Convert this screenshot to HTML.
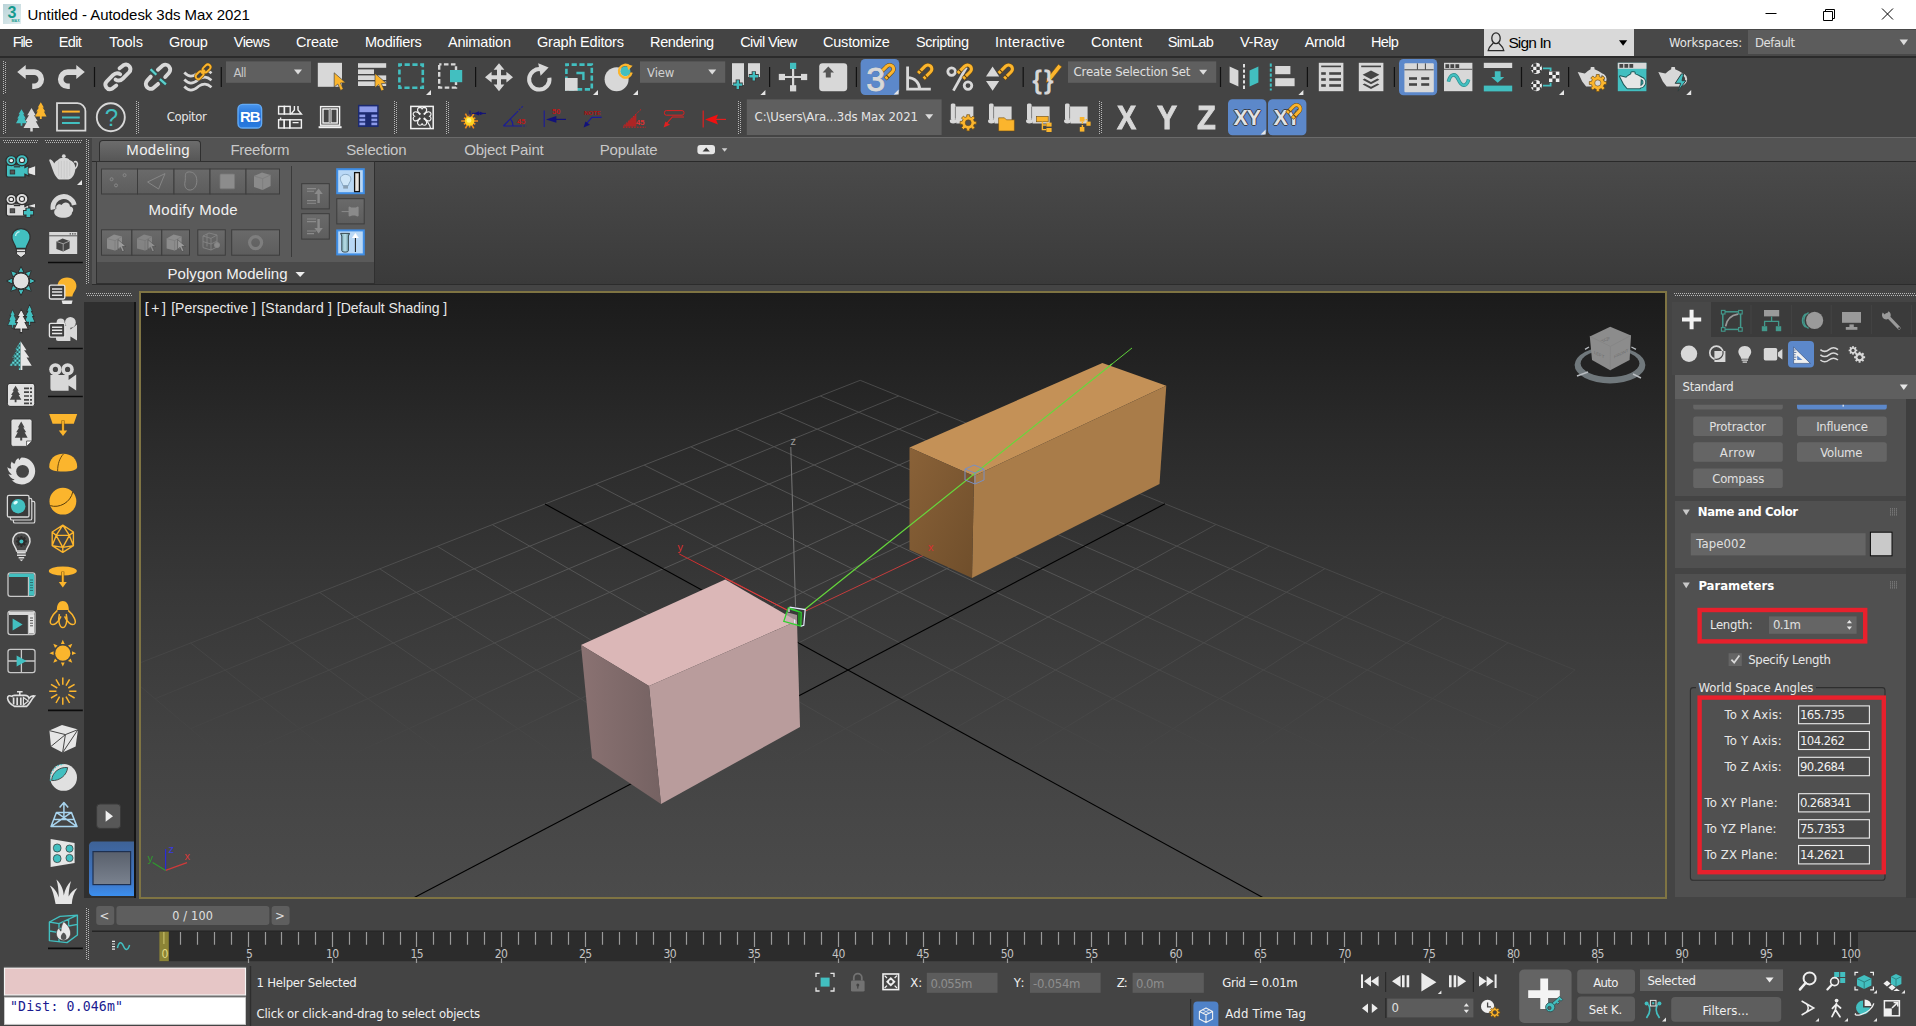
<!DOCTYPE html>
<html lang="en"><head><meta charset="utf-8"><title>Untitled - Autodesk 3ds Max 2021</title>
<style>
html,body{margin:0;padding:0;background:#444;}
body{width:1916px;height:1026px;position:relative;overflow:hidden;font-family:"Liberation Sans",sans-serif;}
#app{position:absolute;left:0;top:0;width:1916px;height:1026px;overflow:hidden;background:#444;}
#app div,#app svg,#app span{position:absolute;}
#app div{box-sizing:border-box;}
.t{white-space:pre;line-height:24px;height:24px;}
svg{overflow:visible;}
</style></head>
<body><div id="app">
<div style="left:0px;top:0px;width:1916px;height:29px;background:#ffffff;"></div>
<span id="t0" class="t" style="left:27.5px;top:2.8px;font-size:15px;color:#000;letter-spacing:-0.06px;">Untitled - Autodesk 3ds Max 2021</span>
<div style="left:3px;top:4px;width:18px;height:20px;background:linear-gradient(135deg,#b9d3d8,#e3eef0);"></div>
<span id="t1" class="t" style="left:7.6px;top:0.9px;font-size:16px;color:#169a8e;font-weight:700;">3</span>
<span id="t2" class="t" style="left:11.6px;top:9.4px;font-size:3.6px;color:#169a8e;font-weight:700;">MAX</span>
<svg style="left:1760px;top:0px;" width="156" height="29"><g stroke="#000" stroke-width="1" fill="none"><path d="M5.5 13.5h11"/><path d="M63.5 11.5h9v9h-9z M65.5 11.5v-2h9v9h-2"/><path d="M122 8.5l11 11M133 8.5l-11 11"/></g></svg>
<div style="left:0px;top:29px;width:1916px;height:27px;background:#444444;"></div>
<div style="left:0px;top:56px;width:1916px;height:2px;background:#2b2b2b;"></div>
<span id="t3" class="t" style="left:12.7px;top:29.8px;font-size:14.5px;color:#ffffff;letter-spacing:-1.12px;">File</span>
<span id="t4" class="t" style="left:58.8px;top:29.8px;font-size:14.5px;color:#ffffff;letter-spacing:-0.67px;">Edit</span>
<span id="t5" class="t" style="left:109.2px;top:29.8px;font-size:14.5px;color:#ffffff;letter-spacing:-0.01px;">Tools</span>
<span id="t6" class="t" style="left:169.0px;top:29.8px;font-size:14.5px;color:#ffffff;letter-spacing:-0.40px;">Group</span>
<span id="t7" class="t" style="left:233.8px;top:29.8px;font-size:14.5px;color:#ffffff;letter-spacing:-0.58px;">Views</span>
<span id="t8" class="t" style="left:295.9px;top:29.8px;font-size:14.5px;color:#ffffff;letter-spacing:-0.15px;">Create</span>
<span id="t9" class="t" style="left:365.0px;top:29.8px;font-size:14.5px;color:#ffffff;letter-spacing:-0.25px;">Modifiers</span>
<span id="t10" class="t" style="left:447.9px;top:29.8px;font-size:14.5px;color:#ffffff;letter-spacing:-0.17px;">Animation</span>
<span id="t11" class="t" style="left:537.0px;top:29.8px;font-size:14.5px;color:#ffffff;letter-spacing:-0.21px;">Graph Editors</span>
<span id="t12" class="t" style="left:650.0px;top:29.8px;font-size:14.5px;color:#ffffff;letter-spacing:-0.34px;">Rendering</span>
<span id="t13" class="t" style="left:740.2px;top:29.8px;font-size:14.5px;color:#ffffff;letter-spacing:-0.61px;">Civil View</span>
<span id="t14" class="t" style="left:823.0px;top:29.8px;font-size:14.5px;color:#ffffff;letter-spacing:-0.21px;">Customize</span>
<span id="t15" class="t" style="left:915.9px;top:29.8px;font-size:14.5px;color:#ffffff;letter-spacing:-0.42px;">Scripting</span>
<span id="t16" class="t" style="left:995.0px;top:29.8px;font-size:14.5px;color:#ffffff;letter-spacing:0.30px;">Interactive</span>
<span id="t17" class="t" style="left:1090.9px;top:29.8px;font-size:14.5px;color:#ffffff;letter-spacing:0.05px;">Content</span>
<span id="t18" class="t" style="left:1167.7px;top:29.8px;font-size:14.5px;color:#ffffff;letter-spacing:-0.61px;">SimLab</span>
<span id="t19" class="t" style="left:1239.9px;top:29.8px;font-size:14.5px;color:#ffffff;letter-spacing:-0.20px;">V-Ray</span>
<span id="t20" class="t" style="left:1304.7px;top:29.8px;font-size:14.5px;color:#ffffff;letter-spacing:-0.30px;">Arnold</span>
<span id="t21" class="t" style="left:1370.9px;top:29.8px;font-size:14.5px;color:#ffffff;letter-spacing:-0.61px;">Help</span>
<div style="left:1484px;top:29px;width:150px;height:27px;background:#d9d9d9;"></div>
<span id="t22" class="t" style="left:1508.4px;top:30.7px;font-size:15.5px;color:#000;letter-spacing:-0.86px;">Sign In</span>
<svg style="left:1484px;top:29px;" width="150" height="27"><g fill="none" stroke="#2a2a2a" stroke-width="1.3"><ellipse cx="12" cy="9.2" rx="4.2" ry="5.4"/><path d="M9.4 13.6C8.6 16 4.6 16.6 4.2 21.6H19.8C19.4 16.6 15.4 16 14.6 13.6"/></g><path d="M135 11.2H143.2L139.1 16.8Z" fill="#000"/></svg>
<div style="left:1634px;top:29px;width:282px;height:27px;background:#484848;"></div>
<span id="t23" class="t" style="left:1669.0px;top:31.0px;font-size:13px;color:#e6e6e6;font-family:'DejaVu Sans Condensed', 'DejaVu Sans', sans-serif;font-stretch:condensed;letter-spacing:-0.06px;">Workspaces:</span>
<div style="left:1747.5px;top:29.6px;width:169px;height:24.6px;background:#5c5c5c;"></div>
<svg style="left:1890px;top:29px;" width="26" height="27"><path d="M9.6 10.6H18L13.8 16.2Z" fill="#dcdcdc"/></svg>
<span id="t24" class="t" style="left:1755.0px;top:30.5px;font-size:13px;color:#e0e0e0;font-family:'DejaVu Sans Condensed', 'DejaVu Sans', sans-serif;font-stretch:condensed;letter-spacing:-0.46px;">Default</span>
<div style="left:0px;top:58px;width:1916px;height:80px;background:#444444;"></div>
<svg style="left:0;top:0" width="1916" height="140"><path d="M3.5 61V94M5.5 62V94" stroke="#b8b8b8" stroke-width="1" stroke-dasharray="1 1" fill="none"/><path transform="translate(17.2,65.1)" d="M0 7L8.5 0V4.2H17A9.9 9.9 0 0 1 17 24H15V18.4H17A4.3 4.3 0 0 0 17 9.8H8.5V14Z" fill="#d8d8d8"/><path transform="translate(84.8,65.1) scale(-1,1)" d="M0 7L8.5 0V4.2H17A9.9 9.9 0 0 1 17 24H15V18.4H17A4.3 4.3 0 0 0 17 9.8H8.5V14Z" fill="#d8d8d8"/><path d="M94.5 67V87" stroke="#111" stroke-width="1.2"/><g transform="translate(117.9,76.9)" fill="none" stroke="#d8d8d8" stroke-width="3.9" stroke-linecap="round"><path d="M1.66 -8.62L5.97 -11.93A4.6 4.6 0 0 1 11.27 -4.64L4.97 1.66C3.31 3.31 0.66 4.64 -2.32 2.65"/><path transform="rotate(180)" d="M1.66 -8.62L5.97 -11.93A4.6 4.6 0 0 1 11.27 -4.64L4.97 1.66C3.31 3.31 0.66 4.64 -2.32 2.65"/></g><g transform="translate(158,76.8)" fill="none" stroke-linecap="round"><path d="M-0.07 -7.13L4.9 -11.43A4.9 4.9 0 0 1 10.87 -3.81L7.23 0.17" stroke="#d8d8d8" stroke-width="3.9"/><path transform="rotate(180)" d="M-0.07 -7.13L4.9 -11.43A4.9 4.9 0 0 1 10.87 -3.81L7.23 0.17" stroke="#d8d8d8" stroke-width="3.9"/><path d="M-7.4 -7.5L-1.7 -2.1M1.9 2.4L7.9 7.5" stroke="#1f5f5f" stroke-width="3.4" stroke-linecap="butt"/><path d="M-7.4 -7.5L-1.7 -2.1M1.9 2.4L7.9 7.5" stroke="#5fd0cc" stroke-width="2.2" stroke-linecap="butt"/></g><g fill="none" stroke="#d8d8d8" stroke-width="2.7"><path d="M184.3 86.5C186.5 88.8 188.5 90.2 190.9 90.2C194.5 90.2 197 87.6 199 86C201 84.6 203 84.2 204.9 84.2C207.4 84.2 209.5 85.6 211.5 87.2"/><path transform="translate(0,-7)" d="M184.3 86.5C186.5 88.8 188.5 90.2 190.9 90.2C194.5 90.2 197 87.6 199 86C201 84.6 203 84.2 204.9 84.2C207.4 84.2 209.5 85.6 211.5 87.2"/><path transform="translate(0,-14)" d="M184.3 86.5C186.5 88.8 188.5 90.2 190.9 90.2C193.5 90.2 195.4 89 197 87.6M208.6 85.2C209.6 85.8 210.6 86.4 211.5 87.2"/></g><g fill="none" stroke="#6b4a12" stroke-width="3.0"><rect x="-4.4" y="-2.7" width="8.8" height="5.4" rx="2.7" transform="translate(206.6,68.4) rotate(-45)"/><rect x="-4.4" y="-2.7" width="8.8" height="5.4" rx="2.7" transform="translate(199.6,75.2) rotate(-45)"/><path d="M201.4 73.4L204.8 70" stroke-width="3.2"/></g><g fill="none" stroke="#fbb52d" stroke-width="1.9"><rect x="-4.4" y="-2.7" width="8.8" height="5.4" rx="2.7" transform="translate(206.6,68.4) rotate(-45)"/><rect x="-4.4" y="-2.7" width="8.8" height="5.4" rx="2.7" transform="translate(199.6,75.2) rotate(-45)"/><path d="M201.4 73.4L204.8 70" stroke-width="2.1"/></g><path d="M221.3 67V87" stroke="#111" stroke-width="1.2"/><rect x="226" y="61.4" width="85" height="21.4" fill="#5f5f5f"/><path d="M294.0 69.5h8l-4.0 5z" fill="#dcdcdc"/><rect x="317.8" y="62.8" width="24.2" height="24" fill="#d8d8d8"/><path transform="translate(334.2,72.8) scale(1.06)" d="M0 0L0 13.5L3.4 10.6L6 16.6L8.6 15.4L6 9.6L10.8 9.4Z" fill="#fbb52d" stroke="#3a3a3a" stroke-width="0.6"/><g fill="#d8d8d8"><rect x="358" y="63.2" width="28.2" height="4.6"/><rect x="358" y="69.4" width="16" height="4.6"/><rect x="358" y="75.4" width="28.2" height="4.6"/><rect x="358" y="81.4" width="28.2" height="4.6"/></g><path transform="translate(375,73.4) scale(1.06)" d="M0 0L0 13.5L3.4 10.6L6 16.6L8.6 15.4L6 9.6L10.8 9.4Z" fill="#fbb52d" stroke="#3a3a3a" stroke-width="0.6"/><rect x="399.4" y="64.6" width="23.4" height="23.2" fill="none" stroke="#42bfc0" stroke-width="2.6" stroke-dasharray="5.2 2.6" stroke-dashoffset="2.6"/><path d="M431 95h-5l5 -5z" fill="#e6e6e6"/><rect x="439.2" y="64.4" width="16.8" height="23.2" fill="none" stroke="#d8d8d8" stroke-width="2.4" stroke-dasharray="4.6 2.4" stroke-dashoffset="2.3"/><rect x="450" y="70" width="12.2" height="12.2" fill="#42bfc0"/><path d="M475.6 67V87" stroke="#111" stroke-width="1.2"/><path transform="translate(499,77.2)" d="M0 -14L5.4 -7.4H2V-2H7.4V-5.4L14 0L7.4 5.4V2H2V7.4H5.4L0 14L-5.4 7.4H-2V2H-7.4V5.4L-14 0L-7.4 -5.4V-2H-2V-7.4H-5.4Z" fill="#d8d8d8"/><path d="M541.6 69.4A10.2 10.2 0 1 0 549.4 77.8" fill="none" stroke="#d8d8d8" stroke-width="4"/><path d="M538.2 63.2L548.6 67.6L540.6 75.8Z" fill="#d8d8d8"/><rect x="566.4" y="64.6" width="25.4" height="24.8" fill="none" stroke="#42bfc0" stroke-width="2.6" stroke-dasharray="5.2 2.6" stroke-dashoffset="2.6"/><rect x="565" y="78" width="12.6" height="12.8" fill="#d8d8d8"/><path d="M576.4 73H583.4V80" fill="none" stroke="#42bfc0" stroke-width="2.4"/><path d="M598 95h-5l5 -5z" fill="#e6e6e6"/><circle cx="616.6" cy="79.2" r="12" fill="#d8d8d8"/><circle cx="625.4" cy="71.2" r="5" fill="#42bfc0"/><path d="M629.6 66.4A6.4 6.4 0 1 0 631.6 72.6" fill="none" stroke="#fbb52d" stroke-width="2.4"/><path d="M626.6 64.2L632.6 65.8L628.4 70.2Z" fill="#fbb52d"/><path d="M638 95h-5l5 -5z" fill="#e6e6e6"/><rect x="640" y="61.4" width="85.2" height="21.4" fill="#5f5f5f"/><path d="M708.2 69.5h8l-4.0 5z" fill="#dcdcdc"/><rect x="732" y="63.2" width="12" height="21.8" fill="#d8d8d8"/><rect x="748" y="63.2" width="12" height="13.8" fill="#d8d8d8"/><path d="M737.8 79.6v10M732.8 84.6h10M753.8 71.2v10M748.8 76.2h10" stroke="#3a3a3a" stroke-width="4.2"/><path d="M737.8 80.2v8.8M733.4 84.6h8.8M753.8 71.8v8.8M749.4 76.2h8.8" stroke="#42bfc0" stroke-width="2.4"/><path d="M765.4 95h-5l5 -5z" fill="#e6e6e6"/><path d="M769.6 67V87" stroke="#111" stroke-width="1.2"/><path d="M793.1 66V88M782 77H804" stroke="#d8d8d8" stroke-width="2.2"/><rect x="790" y="62.8" width="6.2" height="6.2" fill="#42bfc0"/><rect x="790" y="85.2" width="6.2" height="6.2" fill="#d8d8d8"/><rect x="778.8" y="73.9" width="6.2" height="6.2" fill="#d8d8d8"/><rect x="801" y="73.9" width="6.2" height="6.2" fill="#d8d8d8"/><rect x="819.2" y="63.2" width="28" height="28" rx="3.4" fill="#d8d8d8"/><path d="M828.3 66.6L834 72.4H830.8V77.6H825.8V72.4H822.6Z" fill="#555"/><path d="M856.4 67V87" stroke="#111" stroke-width="1.2"/><rect x="860.6" y="59" width="38.6" height="36" rx="4.5" fill="#5c88ca"/><path d="M898.6 94.4h-5l5 -5z" fill="#e6e6e6"/><g transform="translate(888.3439999999999,70.296) rotate(45) scale(1.04)" fill="none" stroke-linecap="butt"><path d="M-3.8 8V-1.8A3.8 3.8 0 0 1 3.8 -1.8V8" stroke="#6b4a12" stroke-width="4"/><path d="M-3.8 7.6V-1.8A3.8 3.8 0 0 1 3.8 -1.8V7.6" stroke="#fbb52d" stroke-width="3"/><path d="M-5.6 4.6h3.6M2 4.6h3.6" stroke="#5a3e10" stroke-width="1"/></g><path d="M907.6 66.6V89.2H930.8" fill="none" stroke="#d8d8d8" stroke-width="2.8"/><path d="M907.6 77.6C914.6 77.6 919.6 82.6 919.6 89.2" fill="none" stroke="#d8d8d8" stroke-width="2.8"/><g transform="translate(926.544,70.296) rotate(45) scale(1.04)" fill="none" stroke-linecap="butt"><path d="M-3.8 8V-1.8A3.8 3.8 0 0 1 3.8 -1.8V8" stroke="#6b4a12" stroke-width="4"/><path d="M-3.8 7.6V-1.8A3.8 3.8 0 0 1 3.8 -1.8V7.6" stroke="#fbb52d" stroke-width="3"/><path d="M-5.6 4.6h3.6M2 4.6h3.6" stroke="#5a3e10" stroke-width="1"/></g><g fill="none" stroke="#d8d8d8" stroke-width="2.8"><circle cx="951.6" cy="71.6" r="3.8"/><circle cx="968" cy="85.6" r="3.8"/><path d="M953.4 90.6L966.4 67.2"/></g><g transform="translate(966.144,70.296) rotate(45) scale(1.04)" fill="none" stroke-linecap="butt"><path d="M-3.8 8V-1.8A3.8 3.8 0 0 1 3.8 -1.8V8" stroke="#6b4a12" stroke-width="4"/><path d="M-3.8 7.6V-1.8A3.8 3.8 0 0 1 3.8 -1.8V7.6" stroke="#fbb52d" stroke-width="3"/><path d="M-5.6 4.6h3.6M2 4.6h3.6" stroke="#5a3e10" stroke-width="1"/></g><path d="M986 76.4L992.6 66.6L999.2 76.4ZM986 81L999.2 81L992.6 90.8Z" fill="#d8d8d8"/><g transform="translate(1007.144,70.296) rotate(45) scale(1.04)" fill="none" stroke-linecap="butt"><path d="M-3.8 8V-1.8A3.8 3.8 0 0 1 3.8 -1.8V8" stroke="#6b4a12" stroke-width="4"/><path d="M-3.8 7.6V-1.8A3.8 3.8 0 0 1 3.8 -1.8V7.6" stroke="#fbb52d" stroke-width="3"/><path d="M-5.6 4.6h3.6M2 4.6h3.6" stroke="#5a3e10" stroke-width="1"/></g><path d="M1023.2 67V87" stroke="#111" stroke-width="1.2"/><path d="M1047 78.6L1058.4 64.2L1061.8 66.8L1050.4 81.2L1046 82.6Z" fill="#fbb52d" stroke="#6b4a12" stroke-width="0.6"/><rect x="1068" y="61.4" width="148.2" height="21.4" fill="#5f5f5f"/><path d="M1199.2 69.7h8l-4.0 5z" fill="#dcdcdc"/><path d="M1220.5 67V87" stroke="#111" stroke-width="1.2"/><path d="M1229.6 66.4L1238.4 70.6V86.6L1229.6 82.4Z" fill="#d8d8d8"/><path d="M1244 64V90" stroke="#f0f0f0" stroke-width="1.8" stroke-dasharray="3.4 2"/><path d="M1258.4 66.4L1249.6 70.6V86.6L1258.4 82.4Z" fill="#42bfc0"/><path d="M1270.8 63.4V90.4" stroke="#42bfc0" stroke-width="2" stroke-dasharray="3.4 1.6"/><rect x="1275.2" y="66" width="15.2" height="8.2" fill="#d8d8d8"/><rect x="1275.2" y="78.2" width="19.4" height="8" fill="#d8d8d8"/><path d="M1303.4 95h-5l5 -5z" fill="#e6e6e6"/><path d="M1307.4 67V87" stroke="#111" stroke-width="1.2"/><rect x="1318.8" y="62.8" width="24.6" height="28.4" fill="#d8d8d8"/><g fill="#454545"><rect x="1321.2" y="65.6" width="19.8" height="1.6"/><rect x="1321.2" y="72.2" width="4.6" height="2.6"/><rect x="1329.2" y="72.2" width="11.8" height="2.6"/><rect x="1321.2" y="78.2" width="4.6" height="2.6"/><rect x="1329.2" y="78.2" width="11.8" height="2.6"/><rect x="1321.2" y="84.2" width="4.6" height="2.6"/><rect x="1329.2" y="84.2" width="11.8" height="2.6"/></g><rect x="1358.8" y="62.8" width="24.6" height="28.4" fill="#d8d8d8"/><g fill="#454545"><rect x="1361.2" y="65.6" width="19.8" height="1.6"/><path d="M1371 70.4L1379.4 74.8L1371 79.2L1362.6 74.8Z"/><path d="M1364.6 78.6L1371 82L1377.4 78.6L1379.4 79.8L1371 84.2L1362.6 79.8Z"/><path d="M1364.6 83.4L1371 86.8L1377.4 83.4L1379.4 84.6L1371 89L1362.6 84.6Z"/></g><path d="M1394.4 67V87" stroke="#111" stroke-width="1.2"/><rect x="1399" y="59" width="38.2" height="36.2" rx="4.5" fill="#5c88ca"/><rect x="1404.4" y="63.2" width="29.4" height="29" rx="1" fill="#d8d8d8"/><g fill="none" stroke="#454545" stroke-width="1"><path d="M1404.4 69.8H1417.4V63.4M1425.4 63.4V69.8M1417.4 69.8H1433.6"/></g><g fill="#454545"><rect x="1409" y="77.2" width="8" height="2.6"/><rect x="1421.2" y="77.2" width="8" height="2.6"/><rect x="1409" y="83.2" width="8" height="2.6"/><rect x="1421.2" y="83.2" width="8" height="2.6"/></g><rect x="1444" y="62.8" width="28.4" height="28.4" fill="#d8d8d8"/><g fill="#454545"><rect x="1445.4" y="64.2" width="3.8" height="3.8"/><rect x="1450.4" y="64.2" width="3.8" height="3.8"/><rect x="1455.4" y="64.2" width="3.8" height="3.8"/><rect x="1444" y="68.8" width="28.4" height="0.9"/></g><path d="M1448.4 81.6C1450.4 73.6 1455.4 72.6 1458.4 79.6S1466.4 87.6 1468.6 79.6" fill="none" stroke="#2e8f8f" stroke-width="3.6"/><path d="M1448.4 81.6C1450.4 73.6 1455.4 72.6 1458.4 79.6S1466.4 87.6 1468.6 79.6" fill="none" stroke="#42bfc0" stroke-width="2.2"/><rect x="1483.8" y="62.8" width="28.4" height="5.2" fill="#d8d8d8"/><path d="M1494.8 71.2H1500.6V77H1504.2L1497.7 82.8L1491.2 77H1494.8Z" fill="#42bfc0"/><rect x="1483.8" y="85.6" width="28.4" height="5.8" fill="#42bfc0"/><path d="M1521.5 67V87" stroke="#111" stroke-width="1.2"/><circle cx="1536.4" cy="68.3" r="5.6" fill="#f0f0f0"/><path d="M1533.2 63.3h3.2v3.4h-3.2zM1536.4 66.7h3.4v3.2h-3.4zM1533.2 69.89999999999999h3.2v3.2h-3.2zM1530.6 66.7h2.6v3.2h-2.6zM1539.8 63.9h1.4v2.8h-1.4zM1539.8 69.89999999999999h1.4v2.6h-1.4z" fill="#3c3c3c"/><circle cx="1536.4" cy="85.6" r="5.6" fill="#f0f0f0"/><path d="M1533.2 80.6h3.2v3.4h-3.2zM1536.4 84.0h3.4v3.2h-3.4zM1533.2 87.19999999999999h3.2v3.2h-3.2zM1530.6 84.0h2.6v3.2h-2.6zM1539.8 81.19999999999999h1.4v2.8h-1.4zM1539.8 87.19999999999999h1.4v2.6h-1.4z" fill="#3c3c3c"/><path d="M1543 68.3H1550.6V71M1543 85.6H1550.6V82.8" fill="none" stroke="#42bfc0" stroke-width="1.8"/><rect x="1549" y="71.6" width="10.4" height="10.4" fill="#f0f0f0"/><path d="M1552.4 71.6h3.4v3.4h-3.4zM1549 75h3.4v3.6h-3.4zM1555.8 75h3.6v3.6h-3.6zM1552.4 78.6h3.4v3.4h-3.4z" fill="#3c3c3c"/><path d="M1564 95h-5l5 -5z" fill="#e6e6e6"/><path d="M1568.6 67V87" stroke="#111" stroke-width="1.2"/><g transform="translate(1577.6,66.6) scale(1.0,1.0)" fill="#d8d8d8"><path d="M0.1 5.4L7.2 7C9 5.4 10.6 4.2 13 2.7V1.2Q13 0.5 13.8 0.5H16.2Q16.9 0.5 16.9 1.2V2.7C19.6 3.8 22 5 24 6.4L23.4 18.6L22.7 19.9H8.5L4.6 14.8Z"/><path d="M23.4 7.4C27.4 8.2 28.6 11.6 27.6 14.6C26.8 16.8 25.4 17.8 23 18.4" fill="none" stroke="#d8d8d8" stroke-width="2"/></g><path d="M1606.27 81.52L1606.27 84.48L1604.16 84.53L1603.37 86.42L1604.84 87.95L1602.75 90.04L1601.22 88.57L1599.33 89.36L1599.28 91.47L1596.32 91.47L1596.27 89.36L1594.38 88.57L1592.85 90.04L1590.76 87.95L1592.23 86.42L1591.44 84.53L1589.33 84.48L1589.33 81.52L1591.44 81.47L1592.23 79.58L1590.76 78.05L1592.85 75.96L1594.38 77.43L1596.27 76.64L1596.32 74.53L1599.28 74.53L1599.33 76.64L1601.22 77.43L1602.75 75.96L1604.84 78.05L1603.37 79.58L1604.16 81.47Z" fill="#fbb52d" stroke="#6b4a12" stroke-width="0.7"/><circle cx="1597.8" cy="83" r="3.10" fill="#d8d8d8" stroke="#6b4a12" stroke-width="0.6"/><rect x="1617.8" y="62.8" width="28.6" height="28.4" fill="#42bfc0"/><rect x="1617.8" y="62.8" width="28.6" height="6" fill="#d8d8d8"/><g fill="#454545"><rect x="1619.4" y="64" width="3.8" height="3.8"/><rect x="1624.4" y="64" width="3.8" height="3.8"/><rect x="1629.4" y="64" width="3.8" height="3.8"/></g><g stroke="#1f5a5a" stroke-width="2.4" stroke-linejoin="round"><g transform="translate(1619.9,71.9) scale(0.875,0.82)" fill="#1f5a5a"><path d="M0.1 5.4L7.2 7C9 5.4 10.6 4.2 13 2.7V1.2Q13 0.5 13.8 0.5H16.2Q16.9 0.5 16.9 1.2V2.7C19.6 3.8 22 5 24 6.4L23.4 18.6L22.7 19.9H8.5L4.6 14.8Z"/><path d="M23.4 7.4C27.4 8.2 28.6 11.6 27.6 14.6C26.8 16.8 25.4 17.8 23 18.4" fill="none" stroke="#1f5a5a" stroke-width="4"/></g></g><g transform="translate(1619.9,71.9) scale(0.875,0.82)" fill="#e6e6e6"><path d="M0.1 5.4L7.2 7C9 5.4 10.6 4.2 13 2.7V1.2Q13 0.5 13.8 0.5H16.2Q16.9 0.5 16.9 1.2V2.7C19.6 3.8 22 5 24 6.4L23.4 18.6L22.7 19.9H8.5L4.6 14.8Z"/><path d="M23.4 7.4C27.4 8.2 28.6 11.6 27.6 14.6C26.8 16.8 25.4 17.8 23 18.4" fill="none" stroke="#e6e6e6" stroke-width="2"/></g><g transform="translate(1658.2,66.6) scale(1.0,1.0)" fill="#d8d8d8"><path d="M0.1 5.4L7.2 7C9 5.4 10.6 4.2 13 2.7V1.2Q13 0.5 13.8 0.5H16.2Q16.9 0.5 16.9 1.2V2.7C19.6 3.8 22 5 24 6.4L23.4 18.6L22.7 19.9H8.5L4.6 14.8Z"/><path d="M23.4 7.4C27.4 8.2 28.6 11.6 27.6 14.6C26.8 16.8 25.4 17.8 23 18.4" fill="none" stroke="#d8d8d8" stroke-width="2"/></g><path d="M1681.4 73.9L1675.2 83.3H1680.7L1678.1 91.1L1685.9 80.7H1682L1683.7 73.9Z" fill="#42bfc0" stroke="#2f3f3f" stroke-width="1" stroke-linejoin="round"/><path d="M1691.2 95h-5l5 -5z" fill="#e6e6e6"/><path d="M3.5 101V134M5.5 102V134" stroke="#b8b8b8" stroke-width="1" stroke-dasharray="1 1" fill="none"/><path transform="translate(21.5,118.5) scale(0.86,1.04)" d="M0 -9L3.4 -4H2L5 0H3.4L6.4 4.6H1V7H-1V4.6H-6.4L-3.4 0H-5L-2 -4H-3.4Z" fill="#42bfc0"/><path transform="translate(40.8,111.6) scale(0.9,1.04)" d="M0 -9L3.4 -4H2L5 0H3.4L6.4 4.6H1V7H-1V4.6H-6.4L-3.4 0H-5L-2 -4H-3.4Z" fill="#fbb52d"/><path transform="translate(31.5,121.2) scale(1.25,1.47)" d="M0 -9L3.4 -4H2L5 0H3.4L6.4 4.6H1V7H-1V4.6H-6.4L-3.4 0H-5L-2 -4H-3.4Z" fill="#d8d8d8"/><path d="M57 103.2H77.4A8 8 0 0 1 85.4 111.2V130.6H57Z" fill="none" stroke="#d8d8d8" stroke-width="1.8"/><path d="M62 111.6H79.8" stroke="#fbb52d" stroke-width="2"/><path d="M62 117.6H79.8M62 123H79.8" stroke="#42bfc0" stroke-width="2"/><circle cx="110.8" cy="117.2" r="14" fill="none" stroke="#d8d8d8" stroke-width="1.9"/><path d="M136.5 101V134M138.5 102V134" stroke="#b8b8b8" stroke-width="1" stroke-dasharray="1 1" fill="none"/><defs><linearGradient id="rbg" x1="0" y1="0" x2="0" y2="1"><stop offset="0" stop-color="#4a96ee"/><stop offset="0.5" stop-color="#1f6fd6"/><stop offset="1" stop-color="#2a7ce0"/></linearGradient></defs><rect x="238" y="104.4" width="23.6" height="23.6" rx="4.6" fill="url(#rbg)" stroke="#62aaf6" stroke-width="1.4"/><g fill="none" stroke="#f2f2f2" stroke-width="1.4"><rect x="278.6" y="106.4" width="5.8" height="7.6"/><rect x="284.4" y="106.4" width="5.8" height="7.6"/><path d="M294.4 106V110L291 114H301.4L298 110V106"/><rect x="278.6" y="119.8" width="5.6" height="8.2"/><rect x="284.2" y="119.8" width="5.6" height="8.2"/><rect x="289.8" y="119.8" width="11.6" height="8.2"/><path d="M280.6 117.4V119.6M292.6 122.6H298.6"/></g><g fill="none" stroke="#f2f2f2" stroke-width="1.4"><rect x="320.6" y="106.6" width="19" height="18.6"/><rect x="323" y="109" width="6.4" height="14"/><rect x="330.8" y="109" width="6.4" height="14"/><path d="M318.6 127.2H341.6" stroke-width="2"/></g><rect x="329.2" y="109" width="1.8" height="14" fill="#9a9a9a"/><rect x="358" y="104.8" width="20.6" height="22.2" fill="#1c2a70"/><g fill="#8d9bea"><rect x="359.4" y="106.4" width="17.8" height="5.8"/><rect x="359.4" y="114.6" width="5.8" height="2.6"/><rect x="371.4" y="114.6" width="5.8" height="2.6"/><rect x="359.4" y="118.6" width="5.8" height="2.6"/><rect x="371.4" y="118.6" width="5.8" height="2.6"/><rect x="359.4" y="122.6" width="5.8" height="2.6"/><rect x="371.4" y="122.6" width="5.8" height="2.6"/></g><path d="M394.5 101V134M396.5 102V134" stroke="#b8b8b8" stroke-width="1" stroke-dasharray="1 1" fill="none"/><rect x="410.8" y="106.4" width="22.4" height="22.2" fill="none" stroke="#f2f2f2" stroke-width="1.5"/><g fill="none" stroke="#f2f2f2" stroke-width="1.25" stroke-linejoin="round"><path transform="translate(422.1,116.3) rotate(0) scale(0.93)" d="M-1.5 -2.4C-5.4 -3.6 -6.2 -9.4 -2.4 -9.6C-1 -9.6 -0.2 -8.8 0 -7.8C0.2 -8.8 1 -9.6 2.4 -9.6C6.2 -9.4 5.4 -3.6 1.5 -2.4"/><path transform="translate(422.1,116.3) rotate(90) scale(0.93)" d="M-1.5 -2.4C-5.4 -3.6 -6.2 -9.4 -2.4 -9.6C-1 -9.6 -0.2 -8.8 0 -7.8C0.2 -8.8 1 -9.6 2.4 -9.6C6.2 -9.4 5.4 -3.6 1.5 -2.4"/><path transform="translate(422.1,116.3) rotate(180) scale(0.93)" d="M-1.5 -2.4C-5.4 -3.6 -6.2 -9.4 -2.4 -9.6C-1 -9.6 -0.2 -8.8 0 -7.8C0.2 -8.8 1 -9.6 2.4 -9.6C6.2 -9.4 5.4 -3.6 1.5 -2.4"/><path transform="translate(422.1,116.3) rotate(270) scale(0.93)" d="M-1.5 -2.4C-5.4 -3.6 -6.2 -9.4 -2.4 -9.6C-1 -9.6 -0.2 -8.8 0 -7.8C0.2 -8.8 1 -9.6 2.4 -9.6C6.2 -9.4 5.4 -3.6 1.5 -2.4"/><path d="M423.8 118.6C427 120.8 429.6 124 430.4 128.2"/></g><path d="M446.5 101V134M448.5 102V134" stroke="#b8b8b8" stroke-width="1" stroke-dasharray="1 1" fill="none"/><path d="M473.6 121.0L478.0 121.0M473.1 123.0L475.3 124.3M471.6 124.5L473.8 128.3M469.6 125.0L469.6 127.6M467.6 124.5L465.4 128.3M466.1 123.0L463.9 124.3M465.6 121.0L461.2 121.0M466.1 119.0L463.9 117.7M467.6 117.5L465.4 113.7M469.6 117.0L469.6 114.4M471.6 117.5L473.8 113.7M473.1 119.0L475.3 117.7" stroke="#f08a1c" stroke-width="1.6"/><circle cx="469.6" cy="121" r="4.8" fill="#ffd21e"/><circle cx="469" cy="120.4" r="2.4" fill="#fff27a"/><g stroke="#12127a" fill="#12127a" stroke-width="1"><path d="M470 110.6V117M472 113.4H486"/><path d="M474 113.4L479 111.2V115.6ZM484 113.4L479.6 111.6V115.2Z" stroke="none"/></g><g fill="none" stroke="#1a1a9a" stroke-width="1.1"><path d="M503.4 126H520.6M503.4 126L516.6 112.6"/><path d="M516.6 112.6L523.6 105.4" stroke-dasharray="2 1.4"/><path d="M520.6 126H526.4" stroke-dasharray="1.4 1.4"/><path d="M510.4 119C512.4 121 513 123.4 513 126"/></g><path d="M544.2 110.4V127" stroke="#1a1a9a" stroke-width="1.1"/><path d="M546 119.4L556.4 116V122.8Z" fill="#12127a"/><path d="M555 119.4H566" stroke="#12127a" stroke-width="1.2"/><g fill="none" stroke="#1a1a9a" stroke-width="1.1"><path d="M601.6 117.4H592L585.6 124.6"/></g><path d="M583.6 127.4L585.4 121.4L590 124.8Z" fill="#12127a"/><path d="M623.4 126L641 109.4" stroke="#d02020" stroke-width="1" stroke-dasharray="2 1.2"/><path d="M623.4 126.4L636.4 114V126.4Z" fill="#c02020" opacity="0.85"/><path d="M623 127.2H646" stroke="#d02020" stroke-width="1" stroke-dasharray="1.6 1.2"/><g fill="none" stroke="#e02020" stroke-width="1.1"><path d="M684 117H672.4L666 124.2"/></g><path d="M663.6 127.4L665.4 121.4L670 124.8Z" fill="#e02020"/><rect x="664.4" y="110.6" width="19.6" height="4.6" rx="2" fill="none" stroke="#e02020" stroke-width="1"/><path d="M703.2 110.4V127.6" stroke="#e02020" stroke-width="1.2"/><path d="M705 119.4L718 114.4L716 119.4L718 124.4Z" fill="#f01010"/><path d="M716 119.4H726" stroke="#e02020" stroke-width="1.2"/><path d="M738.5 101V134M740.5 102V134" stroke="#b8b8b8" stroke-width="1" stroke-dasharray="1 1" fill="none"/><rect x="746.8" y="99.4" width="194.8" height="35.6" fill="#5f5f5f"/><path d="M925.2 114.3h8l-4.0 5z" fill="#dcdcdc"/><g transform="translate(949.8,103.2)" fill="#d8d8d8"><path d="M1 1.5C1 0 5.6 0 5.6 1.5L5.6 3.4L23.6 3.4L23.6 20.4L6.6 20.4 L5.6 16 L1 16Z"/><path d="M0 17.4C0 15.2 6.6 15.2 6.6 17.4C6.6 19.8 6 20.4 3.4 20.4C0.8 20.4 0 19.6 0 17.4Z"/><path d="M5.6 3.4V15.4" stroke="#6a6a6a" stroke-width="0.8"/></g><path d="M976.28 121.39L976.28 124.21L974.26 124.25L973.51 126.06L974.91 127.52L972.92 129.51L971.46 128.11L969.65 128.86L969.61 130.88L966.79 130.88L966.75 128.86L964.94 128.11L963.48 129.51L961.49 127.52L962.89 126.06L962.14 124.25L960.12 124.21L960.12 121.39L962.14 121.35L962.89 119.54L961.49 118.08L963.48 116.09L964.94 117.49L966.75 116.74L966.79 114.72L969.61 114.72L969.65 116.74L971.46 117.49L972.92 116.09L974.91 118.08L973.51 119.54L974.26 121.35Z" fill="#fbb52d" stroke="#6b4a12" stroke-width="0.7"/><circle cx="968.2" cy="122.8" r="2.95" fill="#505050" stroke="#6b4a12" stroke-width="0.6"/><g transform="translate(988,103.2)" fill="#d8d8d8"><path d="M1 1.5C1 0 5.6 0 5.6 1.5L5.6 3.4L23.6 3.4L23.6 20.4L6.6 20.4 L5.6 16 L1 16Z"/><path d="M0 17.4C0 15.2 6.6 15.2 6.6 17.4C6.6 19.8 6 20.4 3.4 20.4C0.8 20.4 0 19.6 0 17.4Z"/><path d="M5.6 3.4V15.4" stroke="#6a6a6a" stroke-width="0.8"/></g><path d="M998.6 117.8H1004.4L1006.4 119.8H1014.4V131H998.6Z" fill="#fbb52d" stroke="#6b4a12" stroke-width="0.6"/><g transform="translate(1026,103.2)" fill="#d8d8d8"><path d="M1 1.5C1 0 5.6 0 5.6 1.5L5.6 3.4L23.6 3.4L23.6 20.4L6.6 20.4 L5.6 16 L1 16Z"/><path d="M0 17.4C0 15.2 6.6 15.2 6.6 17.4C6.6 19.8 6 20.4 3.4 20.4C0.8 20.4 0 19.6 0 17.4Z"/><path d="M5.6 3.4V15.4" stroke="#6a6a6a" stroke-width="0.8"/></g><rect x="1036.6" y="116.4" width="11.6" height="5.4" fill="#fbb52d" stroke="#6b4a12" stroke-width="0.6"/><path d="M1042.4 121.8V129.6H1046.4M1042.4 125H1046.4" fill="none" stroke="#fbb52d" stroke-width="1.4"/><rect x="1046.4" y="122.6" width="5.2" height="4" fill="#fbb52d"/><rect x="1046.4" y="128" width="5.2" height="4" fill="#fbb52d"/><g transform="translate(1064,103.2)" fill="#d8d8d8"><path d="M1 1.5C1 0 5.6 0 5.6 1.5L5.6 3.4L23.6 3.4L23.6 20.4L6.6 20.4 L5.6 16 L1 16Z"/><path d="M0 17.4C0 15.2 6.6 15.2 6.6 17.4C6.6 19.8 6 20.4 3.4 20.4C0.8 20.4 0 19.6 0 17.4Z"/><path d="M5.6 3.4V15.4" stroke="#6a6a6a" stroke-width="0.8"/></g><path d="M1082.4 119.6H1087.2M1082.4 121.8V128.4M1088 122V122" fill="none" stroke="#fbb52d" stroke-width="1.4" stroke-dasharray="2 1.2"/><rect x="1079.8" y="117" width="4.6" height="4.6" fill="#fbb52d"/><rect x="1086.4" y="121.6" width="4.2" height="4.2" fill="#fbb52d"/><rect x="1079.8" y="127" width="4.6" height="4.6" fill="#fbb52d"/><path d="M1099.5 101V134M1101.5 102V134" stroke="#b8b8b8" stroke-width="1" stroke-dasharray="1 1" fill="none"/><rect x="1228" y="99.2" width="38.4" height="36" rx="4.5" fill="#5c88ca"/><path d="M1265.6 134.6h-5l5 -5z" fill="#e6e6e6"/><rect x="1268" y="99.2" width="38.4" height="36" rx="4.5" fill="#5c88ca"/></svg>
<span id="t25" class="t" style="left:233.4px;top:60.5px;font-size:13px;color:#c8c8c8;font-family:'DejaVu Sans Condensed', 'DejaVu Sans', sans-serif;font-stretch:condensed;letter-spacing:-0.66px;">All</span>
<span id="t26" class="t" style="left:647.1px;top:60.5px;font-size:13px;color:#d0d0d0;font-family:'DejaVu Sans Condensed', 'DejaVu Sans', sans-serif;font-stretch:condensed;letter-spacing:-0.14px;">View</span>
<span id="t27" class="t" style="left:1073.6px;top:59.8px;font-size:13px;color:#e0e0e0;font-family:'DejaVu Sans Condensed', 'DejaVu Sans', sans-serif;font-stretch:condensed;letter-spacing:-0.14px;">Create Selection Set</span>
<span id="t28" class="t" style="left:166.7px;top:105.2px;font-size:13px;color:#e6e6e6;font-family:'DejaVu Sans Condensed', 'DejaVu Sans', sans-serif;font-stretch:condensed;letter-spacing:-0.42px;">Copitor</span>
<span id="t29" class="t" style="left:754.6px;top:105.2px;font-size:13px;color:#e6e6e6;font-family:'DejaVu Sans Condensed', 'DejaVu Sans', sans-serif;font-stretch:condensed;letter-spacing:-0.11px;">C:\Users\Ara...3ds Max 2021</span>
<span id="t30" class="t" style="left:866.2px;top:67.4px;font-size:34px;color:#d8d8d8;-webkit-text-stroke:0.9px #d8d8d8;text-shadow:0 0 1px #30486e;">3</span>
<span id="t31" class="t" style="left:1032.8px;top:67.6px;font-size:26px;color:#d8d8d8;letter-spacing:3.00px;-webkit-text-stroke:1px #d8d8d8;">{}</span>
<span id="t32" class="t" style="left:104.8px;top:105.9px;font-size:24px;color:#42bfc0;">?</span>
<span id="t33" class="t" style="left:240.0px;top:105.2px;font-size:15px;color:#fff;font-weight:700;letter-spacing:-1.20px;">RB</span>
<span id="t34" class="t" style="left:1117.4px;top:105.6px;font-size:33.5px;color:#d8d8d8;font-weight:700;-webkit-text-stroke:0.9px #d8d8d8;transform:scaleX(0.86);transform-origin:0 0;">X</span>
<span id="t35" class="t" style="left:1156.8px;top:105.6px;font-size:33.5px;color:#d8d8d8;font-weight:700;-webkit-text-stroke:0.9px #d8d8d8;transform:scaleX(0.9);transform-origin:0 0;">Y</span>
<span id="t36" class="t" style="left:1197.4px;top:105.6px;font-size:33.5px;color:#d8d8d8;font-weight:700;-webkit-text-stroke:0.9px #d8d8d8;transform:scaleX(0.92);transform-origin:0 0;">Z</span>
<span id="t37" class="t" style="left:1233.4px;top:106.4px;font-size:21.5px;color:#e2e2e2;font-weight:700;letter-spacing:-1.08px;text-shadow:-1px 0 #3a3f4a,1px 0 #3a3f4a,0 -1px #3a3f4a,0 1px #3a3f4a;">XY</span>
<span id="t38" class="t" style="left:1273.4px;top:106.4px;font-size:21.5px;color:#e2e2e2;font-weight:700;letter-spacing:-1.20px;text-shadow:-1px 0 #3a3f4a,1px 0 #3a3f4a,0 -1px #3a3f4a,0 1px #3a3f4a;">XY</span>
<svg style="left:0;top:0" width="1916" height="140"><g transform="translate(1295.1999999999998,110.0) rotate(45) scale(1.0)" fill="none" stroke-linecap="butt"><path d="M-3.8 8V-1.8A3.8 3.8 0 0 1 3.8 -1.8V8" stroke="#6b4a12" stroke-width="4"/><path d="M-3.8 7.6V-1.8A3.8 3.8 0 0 1 3.8 -1.8V7.6" stroke="#fbb52d" stroke-width="3"/><path d="M-5.6 4.6h3.6M2 4.6h3.6" stroke="#5a3e10" stroke-width="1"/></g></svg>
<span id="t39" class="t" style="left:517.0px;top:110.4px;font-size:7.5px;color:#c01818;font-weight:700;">45</span>
<span id="t40" class="t" style="left:552.0px;top:100.4px;font-size:7.5px;color:#c01818;font-weight:700;">50</span>
<span id="t41" class="t" style="left:584.0px;top:100.5px;font-size:6px;color:#b01010;font-weight:700;">NOTE</span>
<span id="t42" class="t" style="left:636.0px;top:111.4px;font-size:7.5px;color:#e03030;font-weight:700;">45</span>
<div style="left:0px;top:137px;width:1916px;height:1px;background:#6a6a6a;"></div>
<div style="left:92px;top:138px;width:1824px;height:24px;background:#535353;"></div>
<div style="left:92px;top:161px;width:1824px;height:1px;background:#2a2a2a;"></div>
<div style="left:92px;top:162px;width:4px;height:122px;background:#555;"></div>
<div style="left:375px;top:162px;width:1541px;height:122px;background:linear-gradient(#4a4a4a,#3a3a3a);"></div>
<div style="left:92px;top:284px;width:1824px;height:1px;background:#2c2c2c;"></div>
<div style="left:99px;top:140px;width:102px;height:22px;background:linear-gradient(#6c6c6c,#555555);border:1px solid #2f2f2f;border-bottom:none;border-radius:4px 4px 0 0;"></div>
<span id="t43" class="t" style="left:126.3px;top:138.0px;font-size:15px;color:#f0f0f0;letter-spacing:0.36px;">Modeling</span>
<span id="t44" class="t" style="left:230.4px;top:138.0px;font-size:15px;color:#c8c8c8;letter-spacing:-0.26px;">Freeform</span>
<span id="t45" class="t" style="left:346.3px;top:138.0px;font-size:15px;color:#c8c8c8;letter-spacing:-0.18px;">Selection</span>
<span id="t46" class="t" style="left:464.2px;top:138.0px;font-size:15px;color:#c8c8c8;letter-spacing:-0.20px;">Object Paint</span>
<span id="t47" class="t" style="left:599.8px;top:138.0px;font-size:15px;color:#c8c8c8;letter-spacing:-0.20px;">Populate</span>
<div style="left:96px;top:161px;width:279px;height:123px;background:#5a5a5a;border:1px solid #303030;"></div>
<div style="left:97px;top:262px;width:277px;height:21px;background:#4a4a4a;"></div>
<span id="t48" class="t" style="left:148.5px;top:197.5px;font-size:15px;color:#f0f0f0;letter-spacing:0.33px;">Modify Mode</span>
<span id="t49" class="t" style="left:167.5px;top:261.7px;font-size:15px;color:#f0f0f0;letter-spacing:0.05px;">Polygon Modeling</span>
<svg style="left:0;top:0" width="1916" height="300"><path d="M86.5 139V283M88.5 140V283" stroke="#b8b8b8" stroke-width="1" stroke-dasharray="1 1" fill="none"/><defs><linearGradient id="bg1" x1="0" y1="0" x2="0" y2="1"><stop offset="0" stop-color="#6a6a6a"/><stop offset="1" stop-color="#5d5d5d"/></linearGradient></defs><rect x="101.5" y="169.0" width="36.0" height="25.0" fill="url(#bg1)" stroke="#3c3c3c" stroke-width="1"/><rect x="137.5" y="169.0" width="36.5" height="25.0" fill="url(#bg1)" stroke="#3c3c3c" stroke-width="1"/><rect x="174.0" y="169.0" width="36.0" height="25.0" fill="url(#bg1)" stroke="#3c3c3c" stroke-width="1"/><rect x="210.0" y="169.0" width="36.0" height="25.0" fill="url(#bg1)" stroke="#3c3c3c" stroke-width="1"/><rect x="246.0" y="169.0" width="33.5" height="25.0" fill="url(#bg1)" stroke="#3c3c3c" stroke-width="1"/><rect x="101.5" y="229.8" width="30.4" height="25.4" fill="url(#bg1)" stroke="#3c3c3c" stroke-width="1"/><rect x="131.9" y="229.8" width="29.9" height="25.4" fill="url(#bg1)" stroke="#3c3c3c" stroke-width="1"/><rect x="161.8" y="229.8" width="27.7" height="25.4" fill="url(#bg1)" stroke="#3c3c3c" stroke-width="1"/><rect x="197.8" y="229.8" width="27.5" height="25.4" fill="url(#bg1)" stroke="#3c3c3c" stroke-width="1"/><rect x="231.7" y="229.8" width="47.8" height="25.4" fill="url(#bg1)" stroke="#3c3c3c" stroke-width="1"/><g fill="none" stroke="#8a8a8a" stroke-width="0.9"><circle cx="111.6" cy="179.2" r="1.5"/><circle cx="124.6" cy="175.2" r="1.5"/><circle cx="116" cy="185.4" r="1.5"/><path d="M147.6 182L165 173.6L158.6 189Z"/><path d="M188 172C184 172.6 186 178 185 182C184 186 186 190.6 190.6 190C195.6 189.4 197.6 183 196.6 178.6C196 174 192.6 171.4 188 172Z"/></g><rect x="220" y="174" width="14.6" height="14.8" rx="1" fill="#8c8c8c" stroke="#787878" stroke-width="0.8"/><path d="M254 176L262 172.4L270.6 175V186L262.6 190L254 187Z" fill="#8a8a8a"/><path d="M254 176L262.6 178.6L270.6 175M262.6 178.6V190" fill="none" stroke="#7a7a7a" stroke-width="0.7"/><g opacity="1.0"><path d="M107 238.6L114 234.6L122 236.6V247.6L115 250.6L107 248.6Z" fill="#8c8c8c"/><path d="M107 238.6L115 240.6L122 236.6M115 240.6V250.6" fill="none" stroke="#7a7a7a" stroke-width="0.7"/><path transform="translate(118,239.6) scale(0.72)" d="M0 0L0 13.5L3.4 10.6L6 16.6L8.6 15.4L6 9.6L10.8 9.4Z" fill="#9a9a9a" stroke="#3a3a3a" stroke-width="0.6"/></g><g opacity="0.8"><path d="M137 238.6L144 234.6L152 236.6V247.6L145 250.6L137 248.6Z" fill="#8c8c8c"/><path d="M137 238.6L145 240.6L152 236.6M145 240.6V250.6" fill="none" stroke="#7a7a7a" stroke-width="0.7"/><path transform="translate(148,239.6) scale(0.72)" d="M0 0L0 13.5L3.4 10.6L6 16.6L8.6 15.4L6 9.6L10.8 9.4Z" fill="#9a9a9a" stroke="#3a3a3a" stroke-width="0.6"/></g><g opacity="1.0"><path d="M166.6 238.6L173.6 234.6L181.6 236.6V247.6L174.6 250.6L166.6 248.6Z" fill="#8c8c8c"/><path d="M166.6 238.6L174.6 240.6L181.6 236.6M174.6 240.6V250.6" fill="none" stroke="#7a7a7a" stroke-width="0.7"/><path transform="translate(177.6,239.6) scale(0.72)" d="M0 0L0 13.5L3.4 10.6L6 16.6L8.6 15.4L6 9.6L10.8 9.4Z" fill="#9a9a9a" stroke="#3a3a3a" stroke-width="0.6"/></g><g fill="none" stroke="#858585" stroke-width="0.9"><path d="M203 236L209 233L217 235V247L211 250L203 247.6ZM203 236L211 238.4L217 235M211 238.4V250M207 234V246.6M203 241.6L211 244L217 241"/><circle cx="217" cy="245" r="2.6" fill="#8a8a8a"/></g><circle cx="255.6" cy="242.6" r="6" fill="none" stroke="#7e7e7e" stroke-width="3.2"/><path d="M291.5 166V257" stroke="#3a3a3a" stroke-width="1"/><rect x="301.7" y="183.7" width="27.6" height="25.2" fill="url(#bg1)" stroke="#3c3c3c" stroke-width="1"/><rect x="301.7" y="213.7" width="27.6" height="25.4" fill="url(#bg1)" stroke="#3c3c3c" stroke-width="1"/><g stroke="#8a8a8a" stroke-width="1.1" fill="none"><path d="M307 188.6H316M307 191.2H314M307 200.6H316M307 203.2H316"/><path d="M318.6 203V193" stroke-width="2.4"/></g><path d="M314.4 194L318.6 188.4L322.8 194Z" fill="#8a8a8a"/><g stroke="#8a8a8a" stroke-width="1.1" fill="none"><path d="M307 219H316M307 221.6H316M307 231H316M307 233.6H314"/><path d="M318.6 219V229" stroke-width="2.4"/></g><path d="M314.4 228L318.6 233.6L322.8 228Z" fill="#8a8a8a"/><rect x="337.2" y="169.2" width="26.6" height="24.0" fill="#b9d8f6" stroke="#3f8ee6" stroke-width="2"/><path d="M345.6 174.4C349.6 174.4 351.6 177.4 350.6 180.4C350 182.4 348.6 183.4 348.4 185.6H342.8C342.6 183.4 341.2 182.4 340.6 180.4C339.6 177.4 341.6 174.4 345.6 174.4Z" fill="#cfe6f8" stroke="#7a9ab8" stroke-width="0.8"/><rect x="343.2" y="185.6" width="4.8" height="3" fill="#8aa0b4"/><rect x="354.6" y="172.6" width="4.8" height="19" fill="#e8e4e0" stroke="#101010" stroke-width="1.3"/><rect x="336.8" y="198.7" width="27.4" height="25.2" fill="url(#bg1)" stroke="#3c3c3c" stroke-width="1"/><g fill="#8a8a8a"><path d="M349.6 206.4C351.6 208 355.6 208 357.6 206.4L358.6 207V216L357.6 216.6C355.6 215 351.6 215 349.6 216.6L348.6 216V207Z"/></g><path d="M341.6 211.6H349" stroke="#8a8a8a" stroke-width="1"/><rect x="337.2" y="230.4" width="26.6" height="24.0" fill="#b9d8f6" stroke="#3f8ee6" stroke-width="2"/><defs><linearGradient id="tube" x1="0" y1="0" x2="1" y2="0"><stop offset="0" stop-color="#6fa3b0"/><stop offset="0.5" stop-color="#b8dde6"/><stop offset="1" stop-color="#5a8a98"/></linearGradient></defs><path d="M340.6 233.4H349.6L348.4 236V250.6C348.4 252.6 341.8 252.6 341.8 250.6V236Z" fill="url(#tube)" stroke="#2a3a40" stroke-width="0.9"/><path d="M355.4 252V236" stroke="#1a1a1a" stroke-width="1"/><path d="M352.2 238L355.4 233.2L358.6 238" fill="#fff" stroke="#f8f8f8" stroke-width="0.6"/><path d="M295.5 271.9h9.4l-4.7 5z" fill="#ededed"/><rect x="697.4" y="145" width="17.6" height="9.2" rx="3" fill="#e6e6e6"/><path d="M702.6 151.6L706.2 147.6L709.8 151.6Z" fill="#3a3a3a"/><path d="M721.8000000000001 148.3h5.6l-2.8 3.4z" fill="#d0d0d0"/></svg>
<div style="left:84px;top:302px;width:50px;height:596px;background:#2f2f2f;"></div>
<div style="left:134px;top:302px;width:2px;height:596px;background:#151515;"></div>
<svg style="left:0;top:0" width="140" height="1026"><path d="M3 140.5H38M4 142.5H38" stroke="#b8b8b8" stroke-width="1" stroke-dasharray="1 1" fill="none"/><path d="M45 140.5H82M46 142.5H82" stroke="#b8b8b8" stroke-width="1" stroke-dasharray="1 1" fill="none"/><path d="M86.5 139V284M88.5 140V284" stroke="#b8b8b8" stroke-width="1" stroke-dasharray="1 1" fill="none"/><path d="M86 293.5H132M87 295.5H132" stroke="#b8b8b8" stroke-width="1" stroke-dasharray="1 1" fill="none"/><path d="M86.5 908V960M88.5 909V960" stroke="#b8b8b8" stroke-width="1" stroke-dasharray="1 1" fill="none"/><g transform="translate(4.2,154.6) scale(1.07,1)"><path d="M2 10.4H19.4V13L23 11V21.4L19.4 19.6V22.6H4C2.6 22.6 2 21.8 2 20.6Z" fill="#42bfc0" stroke="#2f2f2f" stroke-width="1.2"/><circle cx="6.6" cy="6" r="5" fill="#42bfc0" stroke="#2f2f2f" stroke-width="1.2"/><circle cx="16.6" cy="5.6" r="5.6" fill="#42bfc0" stroke="#2f2f2f" stroke-width="1.2"/><circle cx="6.6" cy="6" r="2.2" fill="#f0f0f0" stroke="#2f2f2f" stroke-width="1"/><circle cx="16.6" cy="5.6" r="2.4" fill="#f0f0f0" stroke="#2f2f2f" stroke-width="1"/><rect x="5.6" y="15.4" width="4.2" height="4" fill="#555" stroke="#2f2f2f" stroke-width="0.8"/><path d="M9 12.2H15" stroke="#2f2f2f" stroke-width="1.2"/><path d="M22.4 13.6L29.4 11V21.4L22.4 19Z" fill="#e6e6e6" stroke="#2f2f2f" stroke-width="0.8"/></g><g transform="translate(4.2,193.4) scale(1.07,1)"><path d="M2 10.4H19.4V13L23 11V21.4L19.4 19.6V22.6H4C2.6 22.6 2 21.8 2 20.6Z" fill="#dcdcdc" stroke="#2f2f2f" stroke-width="1.2"/><circle cx="6.6" cy="6" r="5" fill="#dcdcdc" stroke="#2f2f2f" stroke-width="1.2"/><circle cx="16.6" cy="5.6" r="5.6" fill="#dcdcdc" stroke="#2f2f2f" stroke-width="1.2"/><circle cx="6.6" cy="6" r="2.2" fill="#f0f0f0" stroke="#2f2f2f" stroke-width="1"/><circle cx="16.6" cy="5.6" r="2.4" fill="#f0f0f0" stroke="#2f2f2f" stroke-width="1"/><rect x="5.6" y="15.4" width="4.2" height="4" fill="#555" stroke="#2f2f2f" stroke-width="0.8"/><path d="M9 12.2H15" stroke="#2f2f2f" stroke-width="1.2"/><path d="M22.4 12.6L28.8 10.6V14" fill="#e6e6e6"/><path d="M22.6 14.4V24.4M17.6 19.4H27.8" stroke="#2f2f2f" stroke-width="5.6"/><path d="M22.6 15.2V23.6M18.4 19.4H27" stroke="#42bfc0" stroke-width="3.4"/></g><path d="M21 228.6C27 228.6 30.6 233 30 238.4C29.6 242.4 26.6 244.4 26 248.4H16C15.4 244.4 12.4 242.4 12 238.4C11.4 233 15 228.6 21 228.6Z" fill="#42bfc0" stroke="#2f2f2f" stroke-width="1.2"/><path d="M16.4 249H25.6V254L21 257.6L16.4 254Z" fill="#e0e0e0" stroke="#2f2f2f" stroke-width="1"/><path d="M16.6 251.6H25.4" stroke="#2f2f2f" stroke-width="0.9"/><path d="M15.6 236C15.8 233.6 17.4 232 19.6 231.6" fill="none" stroke="#bff0f0" stroke-width="1.3"/><path d="M21.0 266.4L24.0 272.4L18.0 272.4ZM31.3 270.7L29.2 277.0L25.0 272.8ZM35.6 281.0L29.6 284.0L29.6 278.0ZM31.3 291.3L25.0 289.2L29.2 285.0ZM21.0 295.6L18.0 289.6L24.0 289.6ZM10.7 291.3L12.8 285.0L17.0 289.2ZM6.4 281.0L12.4 278.0L12.4 284.0ZM10.7 270.7L17.0 272.8L12.8 277.0Z" fill="#42bfc0" stroke="#2f2f2f" stroke-width="1"/><circle cx="21" cy="281" r="8" fill="#e0e0e0" stroke="#2f2f2f" stroke-width="1"/><path transform="translate(12.6,320) scale(0.78,1.16)" d="M0 -9L3.4 -4H2L5 0H3.4L6.4 4.6H1V7H-1V4.6H-6.4L-3.4 0H-5L-2 -4H-3.4Z" fill="#42bfc0" stroke="#2f2f2f" stroke-width="0.8"/><path transform="translate(29.6,316.4) scale(0.86,1.3)" d="M0 -9L3.4 -4H2L5 0H3.4L6.4 4.6H1V7H-1V4.6H-6.4L-3.4 0H-5L-2 -4H-3.4Z" fill="#42bfc0" stroke="#2f2f2f" stroke-width="0.8"/><path transform="translate(21.2,322.4) scale(1.12,1.46)" d="M0 -9L3.4 -4H2L5 0H3.4L6.4 4.6H1V7H-1V4.6H-6.4L-3.4 0H-5L-2 -4H-3.4Z" fill="#e6e6e6" stroke="#2f2f2f" stroke-width="0.7"/><defs><pattern id="chk" width="2.4" height="2.4" patternUnits="userSpaceOnUse"><rect width="2.4" height="2.4" fill="#2a5a5a"/><rect width="1.2" height="1.2" fill="#5fd8d8"/><rect x="1.2" y="1.2" width="1.2" height="1.2" fill="#5fd8d8"/></pattern><clipPath id="hl"><rect x="-10" y="-12" width="10" height="24"/></clipPath><clipPath id="hr"><rect x="0" y="-12" width="10" height="24"/></clipPath></defs><g transform="translate(20.6,357.4) scale(1.74,1.8)"><path d="M0 -9L3.4 -4H2L5 0H3.4L6.4 4.6H1V7H-1V4.6H-6.4L-3.4 0H-5L-2 -4H-3.4Z" fill="url(#chk)" clip-path="url(#hl)"/><path d="M0 -9L3.4 -4H2L5 0H3.4L6.4 4.6H1V7H-1V4.6H-6.4L-3.4 0H-5L-2 -4H-3.4Z" fill="#e6e6e6" clip-path="url(#hr)"/></g><rect x="7.4" y="383.4" width="27.4" height="23" rx="2.6" fill="#e0e0e0" stroke="#2f2f2f" stroke-width="1"/><path transform="translate(15.6,395) scale(0.9,1.04)" d="M0 -9L3.4 -4H2L5 0H3.4L6.4 4.6H1V7H-1V4.6H-6.4L-3.4 0H-5L-2 -4H-3.4Z" fill="#444"/><path d="M24 388.4H32M24 392.2H32M24 396H32M24 399.8H32M24 403.4H32" stroke="#444" stroke-width="1.7" stroke-dasharray="5 1 2"/><path d="M13.4 419H29.6C31 419 32 420 32 421.4V441L26.6 446.4H13.4C12 446.4 11 445.4 11 444V421.4C11 420 12 419 13.4 419Z" fill="#e0e0e0" stroke="#2f2f2f" stroke-width="0.8"/><path transform="translate(21.2,432.2) scale(1.0,1.2)" d="M0 -9L3.4 -4H2L5 0H3.4L6.4 4.6H1V7H-1V4.6H-6.4L-3.4 0H-5L-2 -4H-3.4Z" fill="#444"/><path d="M26.6 446.4V441H32Z" fill="#f8f8f8" stroke="#444" stroke-width="0.8"/><path d="M21.8 457.6C29.4 457.6 35.2 463.6 35.2 471C35.2 478.6 29.2 484.4 21.8 484.4C17.4 484.4 14 482.6 11.6 480C13 480.4 14 480.2 14.6 479.6C11.6 478.6 9.4 476.6 8.4 474C9.8 474.8 11 474.8 11.8 474.4C9.4 472.6 7.6 470 7.4 467C8.8 468.4 10.2 468.8 11.4 468.4C10.4 466.4 10.4 463.6 11.8 461.4C12.6 463 13.8 463.6 15 463.6C15 461.4 16.4 459 18.6 458C18.6 459 19 459.6 19.6 460C20.2 458.6 21 457.8 21.8 457.6Z" fill="#e0e0e0"/><circle cx="22.6" cy="471.4" r="6.4" fill="#444"/><g fill="none" stroke="#d8d8d8" stroke-width="1.2"><path d="M31.4 501.4H33.2C34.2 501.4 34.8 502 34.8 503V521.4C34.8 522.4 34.2 523 33.2 523H15C14 523 13.4 522.4 13.4 521.4V520"/><path d="M28.4 498.4H30.2C31.2 498.4 31.8 499 31.8 500V518.4C31.8 519.4 31.2 520 30.2 520H12C11 520 10.4 519.4 10.4 518.4V517"/></g><rect x="7.4" y="495.4" width="21.6" height="21.6" rx="1.6" fill="#3a3a3a" stroke="#d8d8d8" stroke-width="1.3"/><circle cx="18.2" cy="506.2" r="7.2" fill="#42bfc0"/><ellipse cx="15.6" cy="502.6" rx="2.4" ry="1.5" fill="#d8ffff" transform="rotate(-30 15.6 502.6)"/><path d="M21.4 532.6C27 532.6 30.4 536.6 30 541.6C29.6 545.4 26.8 547.2 26.2 551H16.6C16 547.2 13.2 545.4 12.8 541.6C12.4 536.6 15.8 532.6 21.4 532.6Z" fill="#4a4a4a" stroke="#dcdcdc" stroke-width="1.5"/><path d="M17 552.6H25.800000000000001M17 555.2H25.8M18.6 557.8H24.2" stroke="#dcdcdc" stroke-width="1.6"/><path d="M19.4 559.6H23.4L21.4 561.2Z" fill="#dcdcdc"/><path d="M26.92 540.44L26.92 542.36L25.54 542.39L25.03 543.62L25.98 544.62L24.62 545.98L23.62 545.03L22.39 545.54L22.36 546.92L20.44 546.92L20.41 545.54L19.18 545.03L18.18 545.98L16.82 544.62L17.77 543.62L17.26 542.39L15.88 542.36L15.88 540.44L17.26 540.41L17.77 539.18L16.82 538.18L18.18 536.82L19.18 537.77L20.41 537.26L20.44 535.88L22.36 535.88L22.39 537.26L23.62 537.77L24.62 536.82L25.98 538.18L25.03 539.18L25.54 540.41Z" fill="#2c2c2c" stroke="none" stroke-width="0.7"/><circle cx="21.4" cy="541.4" r="2.02" fill="#42bfc0" stroke="none" stroke-width="0.6"/><rect x="8" y="572.8" width="27" height="23.6" rx="2.4" fill="#3e3e3e" stroke="#c8c8c8" stroke-width="1.3"/><path d="M9 573.6H34V577H9Z" fill="#42bfc0"/><rect x="28.6" y="577" width="5.6" height="18.6" fill="#42bfc0"/><path d="M28.4 577V596" stroke="#c8c8c8" stroke-width="1.1"/><path d="M30 580H33M30 582.6H33M30 585.2H33M30 587.8H33M30 590.4H33" stroke="#2a6a6a" stroke-width="1"/><rect x="8" y="611.2" width="27" height="23.4" rx="2.4" fill="#3e3e3e" stroke="#c8c8c8" stroke-width="1.3"/><path d="M9 612H34V615H9Z" fill="#d8d8d8"/><rect x="28.6" y="615" width="5.6" height="18.6" fill="#e6e6e6"/><path d="M28.4 615V634" stroke="#c8c8c8" stroke-width="1.1"/><path d="M30 618H33M30 620.6H33M30 623.2H33M30 625.8H33" stroke="#555" stroke-width="1"/><path d="M12.6 618.4L22.6 624.4L12.6 630.4Z" fill="#42bfc0"/><rect x="8" y="649.4" width="27" height="23.2" rx="2.4" fill="#3e3e3e" stroke="#c8c8c8" stroke-width="1.3"/><path d="M21.4 649.4V672.6M8 661H35" stroke="#c8c8c8" stroke-width="1.3"/><path d="M16.6 655.4L26.6 661L16.6 666.6Z" fill="#42bfc0"/><g fill="none" stroke="#e0e0e0" stroke-width="1.6"><path d="M12 696.4C9 695 7.4 696 7.6 698.4C8 701.4 10.4 704.4 14.4 706.4H26.6C30 703.6 31 699.6 34.6 696C32.6 695.6 30.6 696 29 698.4C28.6 696.4 27 695.4 25 695.4H14.6C13 695.4 12.2 695.6 12 696.4Z"/><path d="M19.8 695V692M17 691.8H22.6"/></g><path d="M13.6 697.4V704.4M17.2 697.4V705M20.8 697.4V705" stroke="#e0e0e0" stroke-width="1.7"/><path d="M23.4 697.4L28.4 701L23.4 705Z" fill="none" stroke="#e0e0e0" stroke-width="1.2"/><g transform="translate(49,154)"><path d="M1.6 5.4C0.6 5 0 5.8 0.4 7C2 10.4 2.6 13 4 16.4C5.6 21 8.6 25.6 11 25.6H19.6C23.6 24.6 26 20.4 26.4 14.6C26.6 10.6 24.6 7.6 21.6 6.4C17.6 4.6 11.6 4.6 8 6.4C6.4 7.2 5.6 8.4 5.4 9.6C4.6 8 3.4 6.2 1.6 5.4Z" fill="#d8d8d8"/><path d="M25 8C27.4 6.8 29 8.6 28.2 11.4C27.6 13.6 26.6 14.6 25.4 15" fill="none" stroke="#d8d8d8" stroke-width="1.6"/><path d="M9 6.2C10 4.6 12 3.8 14.6 3.8C17.4 3.8 19.6 4.6 20.6 6.2Z" fill="#d8d8d8"/><circle cx="14.8" cy="2.2" r="1.9" fill="#d8d8d8"/><path d="M9.6 7.4V22M12.4 6.8V24M15.2 6.8V24.6M18 6.8V24M20.8 7.6V22" stroke="#c4c4c4" stroke-width="0.7" fill="none"/></g><path d="M82 185h-5l5 -5z" fill="#e6e6e6"/><path d="M50 207.4A13.2 13.2 0 0 1 76.4 207.4L71.6 207.4A8.4 8.4 0 0 0 54.8 207.4Z" fill="#d8d8d8" transform="rotate(-12 63.2 205)"/><path d="M56.4 208.6C55.4 205 59.4 203 61.6 205C63.6 200.8 70 202 70 206.4C73.4 206.6 74.2 210.4 72 212.4C72 215.6 68 217.8 63.6 217.8C58.4 217.8 54.2 215.4 54.2 212.4C54.2 210.6 55 209.4 56.4 208.6Z" fill="#d8d8d8"/><rect x="49.2" y="232" width="28" height="22" fill="#d8d8d8"/><path d="M49.2 235.8H77.2" stroke="#4a4a4a" stroke-width="0.9"/><path d="M69.6 233.8H71M72 233.8H73.4M74.4 233.8H75.8" stroke="#4a4a4a" stroke-width="1.2"/><path d="M56.4 241.4L62.6 238.6L69.6 241V248.6L63.2 251.6L56.4 249Z" fill="#454545"/><path d="M56.4 241.4L63.2 243.8L69.6 241M63.2 243.8V251.6" stroke="#a8a8a8" stroke-width="0.9" fill="none"/><path d="M48 262.5H82.8" stroke="#0c0c0c" stroke-width="1.6"/><path d="M67 277.4C73 277.4 76.8 281.6 76.4 286.6C76 290.6 73 292.6 72.4 296.4H62C61.4 292.6 58 290.6 57.6 286.6C57.2 281.6 61 277.4 67 277.4Z" fill="#fbb52d"/><path d="M61.6 300.6H72.6L71.6 304H62.6Z" fill="#e6e6e6"/><rect x="49.4" y="285.2" width="15.4" height="13.8" rx="1.4" fill="#3e3e3e" stroke="#e6e6e6" stroke-width="1.3"/><path d="M52.0 289.0H62.2M52.0 292.09999999999997H62.2M52.0 295.2H62.2" stroke="#e6e6e6" stroke-width="1.5"/><circle cx="60.6" cy="322.6" r="4" fill="#d8d8d8"/><circle cx="70.4" cy="322.4" r="5.4" fill="#d8d8d8"/><path d="M56 326H70.4V329.4L77 324.6V340.6L70.4 336.4V341H58C56.8 341 56 340.2 56 339Z" fill="#d8d8d8"/><rect x="49.4" y="323.4" width="15.4" height="13.8" rx="1.4" fill="#3e3e3e" stroke="#e6e6e6" stroke-width="1.3"/><path d="M52.0 327.2H62.2M52.0 330.29999999999995H62.2M52.0 333.4H62.2" stroke="#e6e6e6" stroke-width="1.5"/><path d="M48 348.5H82.8" stroke="#0c0c0c" stroke-width="1.6"/><circle cx="55.4" cy="369.4" r="6.2" fill="#d8d8d8"/><circle cx="67.6" cy="369.4" r="6.2" fill="#d8d8d8"/><circle cx="55.4" cy="369.4" r="2.6" fill="#444"/><circle cx="67.6" cy="369.4" r="2.6" fill="#444"/><path d="M50.4 375H68.6V380L76.2 374.4V390.6L68.6 385.4V390.8H53C51.4 390.8 50.4 389.8 50.4 388.2Z" fill="#d8d8d8"/><path d="M48 396.5H82.8" stroke="#0c0c0c" stroke-width="1.6"/><path d="M49.2 414H77.2L73.8 423.8H52.6Z" fill="#fbb52d"/><path d="M63 420.4V431" stroke="#7a5510" stroke-width="3"/><path d="M63 420.8V431" stroke="#fbb52d" stroke-width="1.8"/><path d="M58.8 430.6H67.2L63 436Z" fill="#fbb52d"/><path d="M49.2 467C49.2 459 55 453.8 63.2 453.8C71.4 453.8 77.2 459 77.2 467C77.2 470 71 471.6 63.2 471.6C55.4 471.6 49.2 470 49.2 467Z" fill="#fbb52d"/><path d="M63.6 453.8C59.6 458 57.6 464 57.6 471.2" fill="none" stroke="#5a3e0c" stroke-width="0.9"/><circle cx="62.9" cy="501.2" r="13.4" fill="#fbb52d"/><path d="M50.2 505.6C59 508.6 70.6 502.6 72.8 491.8" fill="none" stroke="#5a3e0c" stroke-width="1"/><path d="M62.8 525.2L73.4 532.0L73.4 545.6L62.8 552.4L52.2 545.6L52.2 532.0ZM62.8 547.4L56.2 535.4L69.4 535.4ZM62.8 525.2L56.2 535.4M62.8 525.2L69.4 535.4M73.4 532.0L69.4 535.4M73.4 545.6L69.4 535.4M73.4 545.6L62.8 547.4M62.8 552.4L62.8 547.4M52.2 545.6L62.8 547.4M52.2 545.6L56.2 535.4M52.2 532.0L56.2 535.4" fill="none" stroke="#fbb52d" stroke-width="1.4" stroke-linejoin="round"/><ellipse cx="62.8" cy="571" rx="14" ry="4.6" fill="#fbb52d"/><path d="M62.8 571.6V582.6" stroke="#7a5510" stroke-width="3"/><path d="M62.8 572V582.6" stroke="#fbb52d" stroke-width="1.8"/><path d="M58.8 582H66.8L62.8 587.4Z" fill="#fbb52d"/><path d="M56.8 610C56.8 604 59.4 601 62.8 601C66.2 601 68.8 604 68.8 610Z" fill="#fbb52d"/><g fill="none" stroke="#fbb52d" stroke-width="1.5"><path d="M57.4 610.4C52 615 48.6 622 51.2 624C54 626 58.6 622 61 616.4"/><path d="M68.2 610.4C73.6 615 77 622 74.4 624C71.6 626 67 622 64.6 616.4"/><path d="M59.4 614C57.6 620.4 59.6 627.4 62.8 627.6C66 627.4 68 620.4 66.2 614"/></g><path d="M62.8 639.8L64.7 644.0L60.9 644.0ZM72.3 643.7L70.6 648.0L68.0 645.4ZM76.2 653.2L72.0 655.1L72.0 651.3ZM72.3 662.7L68.0 661.0L70.6 658.4ZM62.8 666.6L60.9 662.4L64.7 662.4ZM53.3 662.7L55.0 658.4L57.6 661.0ZM49.4 653.2L53.6 651.3L53.6 655.1ZM53.3 643.7L57.6 645.4L55.0 648.0Z" fill="#fbb52d"/><circle cx="62.8" cy="653.2" r="7.6" fill="#fbb52d"/><path d="M62.8 684.8L62.8 677.6M66.0 685.7L69.6 679.4M68.3 688.0L74.6 684.4M69.2 691.2L76.4 691.2M68.3 694.4L74.6 698.0M66.0 696.7L69.6 703.0M62.8 697.6L62.8 704.8M59.6 696.7L56.0 703.0M57.3 694.4L51.0 698.0M56.4 691.2L49.2 691.2M57.3 688.0L51.0 684.4M59.6 685.7L56.0 679.4" stroke="#fbb52d" stroke-width="1.5" fill="none"/><path d="M48 710.4H82.8" stroke="#0c0c0c" stroke-width="1.6"/><path d="M49.4 730.6L62 725L78 729.6L75.6 746.6L62.6 752.6L51 746.4Z" fill="#e6e6e6"/><path d="M49.4 730.6L65.4 734.6L78 729.6M65.4 734.6L62.6 752.6M65.4 734.6L51 746.4M78 729.6L62.6 752.6" fill="none" stroke="#444" stroke-width="1"/><circle cx="63.6" cy="777.4" r="13.4" fill="#e0e0e0"/><path d="M50.4 781C50 770 57 764 64 764.4" fill="none" stroke="#42bfc0" stroke-width="1.1" stroke-dasharray="2 1.4"/><path d="M51.6 780.6C52 772 60 766.6 67.6 767.6C67 775 60 781 51.6 780.6Z" fill="#42bfc0" stroke="#2f2f2f" stroke-width="0.8"/><g fill="none" stroke="#a8d4ee" stroke-width="1.5" stroke-linejoin="round"><path d="M56.4 812.4H71.4L77 826.6H51ZM56.4 812.4L77 826.6M71.4 812.4L51 826.6M53.6 819.6H74.4"/><path d="M63.9 817V803.6M59.6 807.6L63.9 802.6L68.2 807.6"/></g><path d="M50.6 839L74.6 843V863L50.6 867Z" fill="#e6e6e6"/><rect x="53.4" y="844" width="7.6" height="8" rx="3.6" fill="#42bfc0" stroke="#2f2f2f" stroke-width="0.7"/><rect x="53.4" y="854.6" width="7.6" height="8" rx="3.6" fill="#42bfc0" stroke="#2f2f2f" stroke-width="0.7"/><rect x="66.0" y="845.0" width="7" height="7.2" rx="3.4" fill="#42bfc0" stroke="#2f2f2f" stroke-width="0.7"/><rect x="66.0" y="854.4" width="7" height="7.2" rx="3.4" fill="#42bfc0" stroke="#2f2f2f" stroke-width="0.7"/><path d="M55.6 904C54 896 52.6 890 49.8 885.6C54.6 888 57.4 893 58.8 897.4C58.6 890 58 884 56.4 879.4C61.4 884 63.4 890 63.8 895.4C65 889.4 67.4 884.6 71 881C69.4 887 68.6 892 68.6 896.6C70.6 892.6 73.4 889.8 77.4 888C73.6 893 72.2 898 71.8 904Z" fill="#e6e6e6"/><g fill="none" stroke="#42bfc0" stroke-width="1.4" stroke-linejoin="round"><path d="M49.4 922L60 916.4L77.4 915.2V935L67 942.6L49.4 940.6ZM49.4 922L59 923.6L77.4 915.2M59 923.6V941.6M49.4 931L59 932.6M68.6 919.4V926M59 929L68.6 926L77.4 924.4"/></g><path d="M63.6 921.6C68 925 70.6 929 70.6 933C70.6 937.4 67.6 940.4 63.4 940.4C59.2 940.4 56.4 937.4 56.4 933.6C56.4 931 57.6 929 59.4 927.6C59.4 929.4 60 930.6 61 931.2C61 927.6 62 924.4 63.6 921.6Z" fill="#e8e8e8" stroke="#3a3a3a" stroke-width="0.6"/><path d="M63.6 932.6C65.6 934 66.4 935.4 66.4 937C66.4 938.8 65.2 940 63.6 940C62 940 60.8 938.8 60.8 937C60.8 935.4 61.8 934 63.6 932.6Z" fill="#555"/><path d="M48 948.4H82.8" stroke="#0c0c0c" stroke-width="1.6"/><rect x="96.6" y="804" width="24" height="24.4" rx="3.4" fill="#575757" stroke="#3a3a3a" stroke-width="1"/><path d="M105.6 810.6L113 816.2L105.6 821.8Z" fill="#f0f0f0"/><defs><linearGradient id="selb" x1="0" y1="0" x2="0" y2="1"><stop offset="0" stop-color="#3e6296"/><stop offset="0.75" stop-color="#3f78c8"/><stop offset="1" stop-color="#3b8ff0"/></linearGradient><linearGradient id="seli" x1="0" y1="0" x2="0" y2="1"><stop offset="0" stop-color="#59606c"/><stop offset="1" stop-color="#7a828f"/></linearGradient></defs><path d="M93 841.6H134V896H93C90.8 896 89 894.2 89 892V845.6C89 843.4 90.8 841.6 93 841.6Z" fill="url(#selb)"/><rect x="93" y="851.6" width="37.6" height="33" fill="url(#seli)" stroke="#1e3050" stroke-width="1.2"/></svg>
<div style="left:139px;top:291px;width:1528px;height:608px;background:#7f7443;"></div>
<svg style="left:0;top:0" width="1916" height="1026"><defs><linearGradient id="vbg" x1="0" y1="0" x2="0" y2="1"><stop offset="0" stop-color="#1b1b1b"/><stop offset="0.25" stop-color="#2b2b2b"/><stop offset="0.5" stop-color="#383838"/><stop offset="0.75" stop-color="#434343"/><stop offset="1" stop-color="#4b4b4b"/></linearGradient><linearGradient id="gfade" x1="0" y1="575" x2="0" y2="770" gradientUnits="userSpaceOnUse"><stop offset="0" stop-color="#fff"/><stop offset="1" stop-color="#000"/></linearGradient><mask id="gm" maskUnits="userSpaceOnUse" x="0" y="0" width="1916" height="1026"><rect x="0" y="0" width="1916" height="1026" fill="url(#gfade)"/></mask><radialGradient id="rfade" cx="800" cy="560" r="760" gradientUnits="userSpaceOnUse" gradientTransform="translate(0,224) scale(1,0.6)"><stop offset="0" stop-color="#fff"/><stop offset="0.3" stop-color="#eee"/><stop offset="0.7" stop-color="#8a8a8a"/><stop offset="1" stop-color="#6a6a6a"/></radialGradient><mask id="rm" maskUnits="userSpaceOnUse" x="0" y="0" width="1916" height="1026"><rect x="0" y="0" width="1916" height="1026" fill="url(#rfade)"/></mask><clipPath id="vc"><rect x="141" y="293" width="1524" height="604"/></clipPath><linearGradient id="pkL" x1="0" y1="0" x2="1" y2="0"><stop offset="0" stop-color="#8a7272"/><stop offset="1" stop-color="#756262"/></linearGradient><linearGradient id="orL" x1="0" y1="0" x2="1" y2="1"><stop offset="0" stop-color="#8a6238"/><stop offset="1" stop-color="#6f4e2b"/></linearGradient></defs><g clip-path="url(#vc)"><rect x="141" y="293" width="1524" height="604" fill="url(#vbg)"/><g mask="url(#gm)" opacity="0.5"><g mask="url(#rm)"><line x1="822.9" y1="1264.6" x2="1575.0" y2="669.9" stroke="#7a7a7a" stroke-width="1" /><line x1="822.9" y1="1264.6" x2="121.4" y2="670.2" stroke="#7a7a7a" stroke-width="1" /><line x1="749.2" y1="1202.1" x2="1508.0" y2="642.8" stroke="#7a7a7a" stroke-width="1" /><line x1="901.9" y1="1202.1" x2="190.6" y2="643.0" stroke="#7a7a7a" stroke-width="1" /><line x1="680.6" y1="1144.0" x2="1444.1" y2="616.9" stroke="#7a7a7a" stroke-width="1" /><line x1="975.4" y1="1144.0" x2="256.6" y2="617.1" stroke="#7a7a7a" stroke-width="1" /><line x1="616.7" y1="1089.9" x2="1383.2" y2="592.2" stroke="#7a7a7a" stroke-width="1" /><line x1="1043.9" y1="1089.9" x2="319.6" y2="592.4" stroke="#7a7a7a" stroke-width="1" /><line x1="557.0" y1="1039.2" x2="1325.0" y2="568.6" stroke="#7a7a7a" stroke-width="1" /><line x1="1107.9" y1="1039.2" x2="379.7" y2="568.8" stroke="#7a7a7a" stroke-width="1" /><line x1="501.0" y1="991.8" x2="1269.3" y2="546.0" stroke="#7a7a7a" stroke-width="1" /><line x1="1167.9" y1="991.8" x2="437.2" y2="546.3" stroke="#7a7a7a" stroke-width="1" /><line x1="448.5" y1="947.3" x2="1216.0" y2="524.5" stroke="#7a7a7a" stroke-width="1" /><line x1="1224.2" y1="947.3" x2="492.3" y2="524.6" stroke="#7a7a7a" stroke-width="1" /><line x1="352.5" y1="866.0" x2="1116.1" y2="484.0" stroke="#7a7a7a" stroke-width="1" /><line x1="1327.1" y1="865.9" x2="595.6" y2="484.1" stroke="#7a7a7a" stroke-width="1" /><line x1="308.6" y1="828.8" x2="1069.1" y2="464.9" stroke="#7a7a7a" stroke-width="1" /><line x1="1374.2" y1="828.7" x2="644.1" y2="465.1" stroke="#7a7a7a" stroke-width="1" /><line x1="267.1" y1="793.6" x2="1024.0" y2="446.7" stroke="#7a7a7a" stroke-width="1" /><line x1="1418.8" y1="793.5" x2="690.8" y2="446.8" stroke="#7a7a7a" stroke-width="1" /><line x1="227.7" y1="760.3" x2="980.7" y2="429.1" stroke="#7a7a7a" stroke-width="1" /><line x1="1460.9" y1="760.1" x2="735.6" y2="429.2" stroke="#7a7a7a" stroke-width="1" /><line x1="190.5" y1="728.7" x2="939.0" y2="412.2" stroke="#7a7a7a" stroke-width="1" /><line x1="1500.9" y1="728.5" x2="778.7" y2="412.3" stroke="#7a7a7a" stroke-width="1" /><line x1="155.1" y1="698.7" x2="898.9" y2="395.9" stroke="#7a7a7a" stroke-width="1" /><line x1="1538.9" y1="698.5" x2="820.2" y2="396.0" stroke="#7a7a7a" stroke-width="1" /><line x1="121.4" y1="670.2" x2="860.2" y2="380.3" stroke="#7a7a7a" stroke-width="1" /><line x1="1575.0" y1="669.9" x2="860.2" y2="380.3" stroke="#7a7a7a" stroke-width="1" /></g></g><line x1="1277.2" y1="905.4" x2="545.0" y2="504.0" stroke="#000" stroke-width="1.1" /><line x1="399.1" y1="905.5" x2="1165.0" y2="503.8" stroke="#000" stroke-width="1.1" /><line x1="805.8" y1="610.9" x2="926.0" y2="554.0" stroke="#c43c3c" stroke-width="1" /><line x1="1100.0" y1="373.6" x2="1132.0" y2="348.0" stroke="#5fd23a" stroke-width="1" /><polygon points="1102.4,362.9 1166.3,385.8 974.0,476.0 909.5,447.6" fill="#c49157" /><polygon points="974.0,476.0 1166.3,385.8 1159.5,484.0 972.0,578.0" fill="#a97c49" /><polygon points="909.5,447.6 974.0,476.0 972.0,578.0 909.5,549.7" fill="url(#orL)" /><line x1="804.0" y1="610.0" x2="1112.0" y2="364.0" stroke="#66d83c" stroke-width="1.2" /><line x1="788.7" y1="610.9" x2="679.3" y2="554.0" stroke="#d03030" stroke-width="1" /><polygon points="725.2,579.5 797.0,621.0 649.0,686.0 581.0,645.0" fill="#dbb7b7" /><polygon points="649.0,686.0 797.0,621.0 800.0,727.0 661.0,804.0" fill="#b99c9c" /><polygon points="581.0,645.0 649.0,686.0 661.0,804.0 592.0,758.0" fill="url(#pkL)" /><line x1="725.2" y1="578.4" x2="788.7" y2="610.9" stroke="#d84040" stroke-width="1" /><polyline points="795.5,606.6 793,520 790.8,447" fill="none" stroke="#808080" stroke-width="1" opacity="0.9"/><polygon points="786,612 797,615 797,626 784.4,621.6" fill="#c8b0b4" opacity="0.75"/><g fill="none" stroke-width="1.3"><path d="M788.4 607.6L783.8 621.4L800.8 626.2L801.2 612.4L788.4 607.6M788.4 607.6L792 609.6L801.2 612.4" stroke="#2fd02f"/><path d="M789.6 607.2L805.2 609.6L803.8 625.2L800.8 626.2M794.6 619.4V623.2M789 608.4V612" stroke="#e6eeff" stroke-width="1.2"/><path d="M799 612.6V625" stroke="#1a9a1a" stroke-width="1.6"/></g><g fill="none" stroke="#7a8fc0" stroke-width="1"><path d="M965 469 L974 465 L984 469 L984 480 L975 484 L965 480 Z M965 469 L975 473 L984 469 M975 473 L975 484"/></g><ellipse cx="1610" cy="365" rx="35.4" ry="18.5" fill="#70787c"/><ellipse cx="1610" cy="363.4" rx="29.4" ry="13.6" fill="#232323"/><path d="M1610.2 326.8L1631 335.4L1629.6 360L1610.2 370.2L1592 360L1589.8 336.4Z" fill="#8c8c8c"/><path d="M1589.8 336.4L1610.4 346.4L1631 335.4M1610.4 346.4L1610.2 370.2" fill="none" stroke="#848484" stroke-width="0.8"/><path d="M1585 349.4L1589 347M1631.4 347L1636 349.4M1577 376L1588 372M1633 374L1641 378" stroke="#b8bcc0" stroke-width="1.4"/><path d="M165.6 870.4V849" stroke="#2a2ad8" stroke-width="1.2"/><path d="M165.6 870.4L187 862.6" stroke="#d03a3a" stroke-width="1.2"/><path d="M165.6 870.4L152.6 862.4" stroke="#2e9a2e" stroke-width="1.2"/></g></svg>
<span id="t50" class="t" style="left:144.8px;top:296.1px;font-size:14px;color:#e8e8e8;letter-spacing:2.62px;">[+]</span>
<span id="t51" class="t" style="left:171.2px;top:296.1px;font-size:14px;color:#e8e8e8;">[Perspective ]</span>
<span id="t52" class="t" style="left:261.2px;top:296.1px;font-size:14px;color:#e8e8e8;letter-spacing:0.23px;">[Standard ]</span>
<span id="t53" class="t" style="left:336.8px;top:296.1px;font-size:14px;color:#e8e8e8;letter-spacing:-0.05px;">[Default Shading ]</span>
<span id="t54" class="t" style="left:677.4px;top:535.2px;font-size:11px;color:#d83030;">y</span>
<span id="t55" class="t" style="left:928.0px;top:535.2px;font-size:11px;color:#d83030;">x</span>
<span id="t56" class="t" style="left:790.4px;top:428.8px;font-size:11px;color:#9a9a9a;">z</span>
<span id="t57" class="t" style="left:168.4px;top:837.2px;font-size:11px;color:#3a3ae0;">z</span>
<span id="t58" class="t" style="left:184.6px;top:844.2px;font-size:11px;color:#d83a3a;">x</span>
<span id="t59" class="t" style="left:147.6px;top:845.8px;font-size:11px;color:#2e9a2e;">y</span>
<span id="t60" class="t" style="left:1601.6px;top:327.5px;font-size:4.4px;color:#6e6e6e;transform:rotate(-24deg) skewX(30deg);">TOP</span>
<span id="t61" class="t" style="left:1594.0px;top:343.1px;font-size:4.2px;color:#6e6e6e;transform:skewY(26deg);">LEFT</span>
<span id="t62" class="t" style="left:1613.6px;top:342.1px;font-size:4.2px;color:#6e6e6e;transform:skewY(-26deg);">FRONT</span>
<div style="left:1672px;top:300px;width:244px;height:598px;background:#444444;"></div>
<div style="left:1672px;top:302px;width:244px;height:35px;background:#3b3b3b;"></div>
<div style="left:1672px;top:302px;width:39px;height:36px;background:#484848;"></div>
<div style="left:1672px;top:337px;width:244px;height:38px;background:#484848;"></div>
<div style="left:1675px;top:374.6px;width:241px;height:24.4px;background:#5f5f5f;"></div>
<div style="left:1675px;top:399px;width:231px;height:97.4px;background:#505050;"></div>
<div style="left:1906px;top:399px;width:10px;height:499px;background:#3e3e3e;"></div>
<div style="left:1675px;top:501.4px;width:231px;height:67px;background:#505050;"></div>
<div style="left:1675px;top:573.6px;width:231px;height:323px;background:#505050;"></div>
<svg style="left:0;top:0" width="1916" height="900"><path d="M1674 293.5H1916M1675 295.5H1916" stroke="#b8b8b8" stroke-width="1" stroke-dasharray="1 1" fill="none"/><path d="M1751 305V334" stroke="#444" stroke-width="1"/><path d="M1791.4 305V334" stroke="#444" stroke-width="1"/><path d="M1831.2 305V334" stroke="#444" stroke-width="1"/><path d="M1871.4 305V334" stroke="#444" stroke-width="1"/><path d="M1911.4 305V334" stroke="#444" stroke-width="1"/><path d="M1691.6 309.8V329.2M1682 319.5H1701.2" stroke="#f2f2f2" stroke-width="4"/><rect x="1722.8" y="311.8" width="17.8" height="17.6" fill="none" stroke="#43998c" stroke-width="1.5"/><rect x="1721.4" y="310.4" width="3.6" height="3.6" fill="#393939" stroke="#43998c" stroke-width="1.1"/><rect x="1738.6" y="310.4" width="3.6" height="3.6" fill="#393939" stroke="#43998c" stroke-width="1.1"/><rect x="1721.4" y="327.6" width="3.6" height="3.6" fill="#393939" stroke="#43998c" stroke-width="1.1"/><rect x="1738.6" y="327.6" width="3.6" height="3.6" fill="#393939" stroke="#43998c" stroke-width="1.1"/><path d="M1725.6 326.4C1726.6 320 1731 315.4 1738 314.2" fill="none" stroke="#9a9a9a" stroke-width="1.8"/><rect x="1764" y="310" width="15.2" height="6.4" fill="#9a9a9a"/><path d="M1771.6 316.4V321M1764.6 326V321.4H1778.6V326" fill="none" stroke="#43998c" stroke-width="1.3"/><rect x="1761.8" y="326.2" width="5.4" height="5" fill="#43998c"/><rect x="1775.8" y="326.2" width="5.4" height="5" fill="#43998c"/><path d="M1808.6 312.6A9 9 0 0 0 1808.6 328.4M1805.6 313.6A9 9 0 0 0 1805.6 327.4" fill="none" stroke="#43998c" stroke-width="1.2"/><circle cx="1814.6" cy="320.4" r="8.6" fill="#9a9a9a"/><rect x="1842" y="312" width="19" height="10.8" fill="#9a9a9a"/><rect x="1849.4" y="324.4" width="4.4" height="2.6" fill="#9a9a9a"/><rect x="1845.8" y="327" width="11.6" height="2.8" fill="#9a9a9a"/><path d="M1886.4 314.8L1899 328" stroke="#9a9a9a" stroke-width="3.2" stroke-linecap="round"/><path d="M1882.8 312.4A4.4 4.4 0 1 0 1888.6 311.2L1886.2 314.6L1884.4 314.2Z" fill="#9a9a9a"/><circle cx="1899.2" cy="328.2" r="1" fill="#393939"/><rect x="1788" y="341" width="26" height="26.4" rx="4" fill="#5c88ca"/><circle cx="1689" cy="353.8" r="8.2" fill="#d8d8d8"/><circle cx="1716.4" cy="352.8" r="6.6" fill="none" stroke="#d8d8d8" stroke-width="1.7"/><path d="M1714.4 351H1725.4V362H1714.4Z" fill="#d8d8d8"/><path d="M1714.4 359A6.6 6.6 0 0 0 1722.8 351" fill="none" stroke="#484848" stroke-width="1.2"/><path d="M1744.8 346C1749.2 346 1751.6 349.2 1751.2 352.6C1750.8 355.2 1748.8 356.4 1748.4 358.8H1741.2C1740.8 356.4 1738.8 355.2 1738.4 352.6C1738 349.2 1740.4 346 1744.8 346Z" fill="#d8d8d8"/><path d="M1741.6 360.2H1748M1742.6 362.2H1747" stroke="#d8d8d8" stroke-width="1.2"/><rect x="1763.8" y="348" width="13.4" height="12.4" rx="1.6" fill="#d8d8d8"/><path d="M1778 352.4L1782.4 349V359.6L1778 356.2Z" fill="#d8d8d8"/><path d="M1793.6 347V363.4H1810.4Z" fill="#f0f0f0"/><path d="M1797.2 355.4V360H1802.4Z" fill="#5c88ca"/><path d="M1794 350H1795.6M1794 352.4H1796.4M1794 354.8H1795.6M1794 357.2H1796.4M1794 359.6H1795.6" stroke="#3a5a90" stroke-width="0.8"/><path d="M1793.6 347V363.4H1810.4Z" fill="none" stroke="#2e4a7a" stroke-width="0.6"/><g fill="none" stroke="#d8d8d8" stroke-width="1.6"><path d="M1820.4 349.6c3 2.4 5.6 2.4 8.6 0s6 -2.4 9 0"/><path d="M1820.4 354.8c3 2.4 5.6 2.4 8.6 0s6 -2.4 9 0"/><path d="M1820.4 360c3 2.4 5.6 2.4 8.6 0s6 -2.4 9 0"/></g><path d="M1857.33 349.64L1857.33 351.16L1856.25 351.18L1855.85 352.15L1856.60 352.93L1855.53 354.00L1854.75 353.25L1853.78 353.65L1853.76 354.73L1852.24 354.73L1852.22 353.65L1851.25 353.25L1850.47 354.00L1849.40 352.93L1850.15 352.15L1849.75 351.18L1848.67 351.16L1848.67 349.64L1849.75 349.62L1850.15 348.65L1849.40 347.87L1850.47 346.80L1851.25 347.55L1852.22 347.15L1852.24 346.07L1853.76 346.07L1853.78 347.15L1854.75 347.55L1855.53 346.80L1856.60 347.87L1855.85 348.65L1856.25 349.62Z" fill="#d8d8d8" stroke="none" stroke-width="0.7"/><circle cx="1853" cy="350.4" r="1.58" fill="#484848" stroke="none" stroke-width="0.6"/><path d="M1865.12 356.24L1865.12 358.16L1863.74 358.19L1863.23 359.42L1864.18 360.42L1862.82 361.78L1861.82 360.83L1860.59 361.34L1860.56 362.72L1858.64 362.72L1858.61 361.34L1857.38 360.83L1856.38 361.78L1855.02 360.42L1855.97 359.42L1855.46 358.19L1854.08 358.16L1854.08 356.24L1855.46 356.21L1855.97 354.98L1855.02 353.98L1856.38 352.62L1857.38 353.57L1858.61 353.06L1858.64 351.68L1860.56 351.68L1860.59 353.06L1861.82 353.57L1862.82 352.62L1864.18 353.98L1863.23 354.98L1863.74 356.21Z" fill="#d8d8d8" stroke="none" stroke-width="0.7"/><circle cx="1859.6" cy="357.2" r="2.02" fill="#484848" stroke="none" stroke-width="0.6"/><path d="M1899.8 384.5h8l-4.0 5.4z" fill="#e6e6e6"/><clipPath id="otc"><rect x="1675" y="404.8" width="231" height="10"/></clipPath><g clip-path="url(#otc)"><rect x="1693.2" y="390" width="89.6" height="19.6" rx="2.6" fill="#656565"/><rect x="1797" y="390" width="89.8" height="19.6" rx="2.6" fill="#5c88ca"/><rect x="1842.6" y="403" width="1.2" height="3.6" fill="#f0f0f0"/></g><rect x="1693.2" y="416.4" width="89.59999999999991" height="19.600000000000023" rx="2.6" fill="#656565"/><rect x="1797" y="416.4" width="89.79999999999995" height="19.600000000000023" rx="2.6" fill="#656565"/><rect x="1693.2" y="442.2" width="89.59999999999991" height="19.600000000000023" rx="2.6" fill="#656565"/><rect x="1797" y="442.2" width="89.79999999999995" height="19.600000000000023" rx="2.6" fill="#656565"/><rect x="1693.2" y="468.4" width="89.59999999999991" height="19.600000000000023" rx="2.6" fill="#656565"/><path d="M1682.6 509.59999999999997H1689.8L1686.2 515.1999999999999Z" fill="#c8c8c8"/><path d="M1890 508.9H1897M1890 510.9H1897M1890 512.9H1897M1890 514.9H1897" stroke="#8a8a8a" stroke-width="1" stroke-dasharray="1 1"/><path d="M1682.6 582.6H1689.8L1686.2 588.1999999999999Z" fill="#c8c8c8"/><path d="M1890 581.9H1897M1890 583.9H1897M1890 585.9H1897M1890 587.9H1897" stroke="#8a8a8a" stroke-width="1" stroke-dasharray="1 1"/><rect x="1690.8" y="533.2" width="174.8" height="22.2" fill="#656565"/><rect x="1870.4" y="532.2" width="21.6" height="23.6" fill="#c9c9c9" stroke="#0c0c0c" stroke-width="1"/><rect x="1769" y="616.4" width="87.6" height="17.4" fill="#656565"/><path d="M1846.8 623.2L1849.4 620L1852 623.2ZM1846.8 626.6L1852 626.6L1849.4 629.8Z" fill="#e6e6e6"/><rect x="1728.6" y="653.2" width="13.2" height="12.8" fill="#656565"/><path d="M1731.4 659.6L1734.2 662.6L1739.4 655.4" fill="none" stroke="#d8d8d8" stroke-width="1.7"/><path d="M1696 687.6H1693.2C1691.4 687.6 1690.4 688.6 1690.4 690.4V877.4C1690.4 879.2 1691.4 880.2 1693.2 880.2H1882.2C1884 880.2 1885 879.2 1885 877.4V690.4C1885 688.6 1884 687.6 1882.2 687.6H1816" fill="none" stroke="#2e2e2e" stroke-width="1.1"/><rect x="1798.6" y="705.9" width="70.8" height="17.8" fill="#4a4a4a" stroke="#ececec" stroke-width="1.1"/><rect x="1798.6" y="731.5" width="70.8" height="18.0" fill="#4a4a4a" stroke="#ececec" stroke-width="1.1"/><rect x="1798.6" y="757.3" width="70.8" height="18.4" fill="#4a4a4a" stroke="#ececec" stroke-width="1.1"/><rect x="1798.6" y="793.7" width="70.8" height="18.2" fill="#4a4a4a" stroke="#ececec" stroke-width="1.1"/><rect x="1798.6" y="819.7" width="70.8" height="18.4" fill="#4a4a4a" stroke="#ececec" stroke-width="1.1"/><rect x="1798.6" y="845.5" width="70.8" height="18.4" fill="#4a4a4a" stroke="#ececec" stroke-width="1.1"/><rect x="1699.6" y="610" width="165.6" height="31.4" fill="none" stroke="#e8202c" stroke-width="4.4"/><rect x="1699.6" y="697.6" width="184.2" height="174.6" fill="none" stroke="#e8202c" stroke-width="4.4"/></svg>
<span id="t63" class="t" style="left:1682.5px;top:375.3px;font-size:13px;color:#e8e8e8;font-family:'DejaVu Sans Condensed', 'DejaVu Sans', sans-serif;font-stretch:condensed;letter-spacing:-0.30px;">Standard</span>
<span id="t64" class="t" style="left:1709.3px;top:414.6px;font-size:13px;color:#e0e0e0;font-family:'DejaVu Sans Condensed', 'DejaVu Sans', sans-serif;font-stretch:condensed;letter-spacing:-0.17px;">Protractor</span>
<span id="t65" class="t" style="left:1816.2px;top:414.6px;font-size:13px;color:#e0e0e0;font-family:'DejaVu Sans Condensed', 'DejaVu Sans', sans-serif;font-stretch:condensed;letter-spacing:-0.27px;">Influence</span>
<span id="t66" class="t" style="left:1719.8px;top:440.6px;font-size:13px;color:#e0e0e0;font-family:'DejaVu Sans Condensed', 'DejaVu Sans', sans-serif;font-stretch:condensed;letter-spacing:0.39px;">Arrow</span>
<span id="t67" class="t" style="left:1820.2px;top:440.6px;font-size:13px;color:#e0e0e0;font-family:'DejaVu Sans Condensed', 'DejaVu Sans', sans-serif;font-stretch:condensed;letter-spacing:-0.22px;">Volume</span>
<span id="t68" class="t" style="left:1712.3px;top:466.9px;font-size:13px;color:#e0e0e0;font-family:'DejaVu Sans Condensed', 'DejaVu Sans', sans-serif;font-stretch:condensed;letter-spacing:-0.25px;">Compass</span>
<span id="t69" class="t" style="left:1697.8px;top:500.2px;font-size:13px;color:#ffffff;font-family:'DejaVu Sans Condensed', 'DejaVu Sans', sans-serif;font-stretch:condensed;font-weight:700;letter-spacing:-0.36px;">Name and Color</span>
<span id="t70" class="t" style="left:1696.3px;top:531.9px;font-size:13px;color:#e0e0e0;font-family:'DejaVu Sans Condensed', 'DejaVu Sans', sans-serif;font-stretch:condensed;letter-spacing:0.12px;">Tape002</span>
<span id="t71" class="t" style="left:1698.4px;top:573.5px;font-size:13px;color:#ffffff;font-family:'DejaVu Sans Condensed', 'DejaVu Sans', sans-serif;font-stretch:condensed;font-weight:700;letter-spacing:-0.04px;">Parameters</span>
<span id="t72" class="t" style="left:1709.9px;top:613.4px;font-size:13px;color:#e8e8e8;font-family:'DejaVu Sans Condensed', 'DejaVu Sans', sans-serif;font-stretch:condensed;letter-spacing:-0.26px;">Length:</span>
<span id="t73" class="t" style="left:1772.9px;top:613.4px;font-size:13px;color:#e0e0e0;font-family:'DejaVu Sans Condensed', 'DejaVu Sans', sans-serif;font-stretch:condensed;letter-spacing:-0.63px;">0.1m</span>
<span id="t74" class="t" style="left:1748.2px;top:647.7px;font-size:13px;color:#e8e8e8;font-family:'DejaVu Sans Condensed', 'DejaVu Sans', sans-serif;font-stretch:condensed;letter-spacing:-0.30px;">Specify Length</span>
<span id="t75" class="t" style="left:1698.4px;top:675.5px;font-size:13px;color:#e8e8e8;font-family:'DejaVu Sans Condensed', 'DejaVu Sans', sans-serif;font-stretch:condensed;letter-spacing:-0.05px;">World Space Angles</span>
<span id="t76" class="t" style="left:1724.5px;top:702.9px;font-size:13px;color:#e8e8e8;font-family:'DejaVu Sans Condensed', 'DejaVu Sans', sans-serif;font-stretch:condensed;letter-spacing:0.22px;">To X Axis:</span>
<span id="t77" class="t" style="left:1799.9px;top:702.9px;font-size:13px;color:#f0f0f0;font-family:'DejaVu Sans Condensed', 'DejaVu Sans', sans-serif;font-stretch:condensed;letter-spacing:-0.56px;">165.735</span>
<span id="t78" class="t" style="left:1724.5px;top:728.8px;font-size:13px;color:#e8e8e8;font-family:'DejaVu Sans Condensed', 'DejaVu Sans', sans-serif;font-stretch:condensed;letter-spacing:0.25px;">To Y Axis:</span>
<span id="t79" class="t" style="left:1799.9px;top:728.8px;font-size:13px;color:#f0f0f0;font-family:'DejaVu Sans Condensed', 'DejaVu Sans', sans-serif;font-stretch:condensed;letter-spacing:-0.56px;">104.262</span>
<span id="t80" class="t" style="left:1724.5px;top:755.0px;font-size:13px;color:#e8e8e8;font-family:'DejaVu Sans Condensed', 'DejaVu Sans', sans-serif;font-stretch:condensed;letter-spacing:0.15px;">To Z Axis:</span>
<span id="t81" class="t" style="left:1799.9px;top:755.0px;font-size:13px;color:#f0f0f0;font-family:'DejaVu Sans Condensed', 'DejaVu Sans', sans-serif;font-stretch:condensed;letter-spacing:-0.56px;">90.2684</span>
<span id="t82" class="t" style="left:1704.6px;top:790.8px;font-size:13px;color:#e8e8e8;font-family:'DejaVu Sans Condensed', 'DejaVu Sans', sans-serif;font-stretch:condensed;letter-spacing:0.21px;">To XY Plane:</span>
<span id="t83" class="t" style="left:1799.9px;top:790.8px;font-size:13px;color:#f0f0f0;font-family:'DejaVu Sans Condensed', 'DejaVu Sans', sans-serif;font-stretch:condensed;letter-spacing:-0.61px;">0.268341</span>
<span id="t84" class="t" style="left:1704.6px;top:816.7px;font-size:13px;color:#e8e8e8;font-family:'DejaVu Sans Condensed', 'DejaVu Sans', sans-serif;font-stretch:condensed;letter-spacing:0.10px;">To YZ Plane:</span>
<span id="t85" class="t" style="left:1799.9px;top:816.7px;font-size:13px;color:#f0f0f0;font-family:'DejaVu Sans Condensed', 'DejaVu Sans', sans-serif;font-stretch:condensed;letter-spacing:-0.56px;">75.7353</span>
<span id="t86" class="t" style="left:1704.6px;top:843.2px;font-size:13px;color:#e8e8e8;font-family:'DejaVu Sans Condensed', 'DejaVu Sans', sans-serif;font-stretch:condensed;letter-spacing:0.13px;">To ZX Plane:</span>
<span id="t87" class="t" style="left:1799.9px;top:843.2px;font-size:13px;color:#f0f0f0;font-family:'DejaVu Sans Condensed', 'DejaVu Sans', sans-serif;font-stretch:condensed;letter-spacing:-0.56px;">14.2621</span>
<svg style="left:0;top:0" width="1916" height="1026"><rect x="96.2" y="906" width="18" height="19" rx="3" fill="#5e5e5e"/><rect x="116.4" y="906" width="153" height="19" rx="3" fill="#5e5e5e"/><rect x="271.6" y="906" width="18" height="19" rx="3" fill="#5e5e5e"/><rect x="92" y="930.6" width="1824" height="1.2" fill="#1e1e1e"/><rect x="160" y="931.6" width="1698" height="29.6" fill="#2c2c2c"/><path d="M180.5 932V944.8M197.5 932V944.8M214.5 932V944.8M231.5 932V944.8M248.5 932V947M248.5 958.6V963M265.5 932V944.8M281.5 932V944.8M298.5 932V944.8M315.5 932V944.8M332.5 932V947M332.5 958.6V963M349.5 932V944.8M366.5 932V944.8M383.5 932V944.8M400.5 932V944.8M416.5 932V947M416.5 958.6V963M433.5 932V944.8M450.5 932V944.8M467.5 932V944.8M484.5 932V944.8M501.5 932V947M501.5 958.6V963M518.5 932V944.8M535.5 932V944.8M551.5 932V944.8M568.5 932V944.8M585.5 932V947M585.5 958.6V963M602.5 932V944.8M619.5 932V944.8M636.5 932V944.8M653.5 932V944.8M670.5 932V947M670.5 958.6V963M686.5 932V944.8M703.5 932V944.8M720.5 932V944.8M737.5 932V944.8M754.5 932V947M754.5 958.6V963M771.5 932V944.8M788.5 932V944.8M804.5 932V944.8M821.5 932V944.8M838.5 932V947M838.5 958.6V963M855.5 932V944.8M872.5 932V944.8M889.5 932V944.8M906.5 932V944.8M923.5 932V947M923.5 958.6V963M939.5 932V944.8M956.5 932V944.8M973.5 932V944.8M990.5 932V944.8M1007.5 932V947M1007.5 958.6V963M1024.5 932V944.8M1041.5 932V944.8M1058.5 932V944.8M1074.5 932V944.8M1091.5 932V947M1091.5 958.6V963M1108.5 932V944.8M1125.5 932V944.8M1142.5 932V944.8M1159.5 932V944.8M1176.5 932V947M1176.5 958.6V963M1192.5 932V944.8M1209.5 932V944.8M1226.5 932V944.8M1243.5 932V944.8M1260.5 932V947M1260.5 958.6V963M1277.5 932V944.8M1294.5 932V944.8M1311.5 932V944.8M1327.5 932V944.8M1344.5 932V947M1344.5 958.6V963M1361.5 932V944.8M1378.5 932V944.8M1395.5 932V944.8M1412.5 932V944.8M1429.5 932V947M1429.5 958.6V963M1446.5 932V944.8M1462.5 932V944.8M1479.5 932V944.8M1496.5 932V944.8M1513.5 932V947M1513.5 958.6V963M1530.5 932V944.8M1547.5 932V944.8M1564.5 932V944.8M1580.5 932V944.8M1597.5 932V947M1597.5 958.6V963M1614.5 932V944.8M1631.5 932V944.8M1648.5 932V944.8M1665.5 932V944.8M1682.5 932V947M1682.5 958.6V963M1699.5 932V944.8M1715.5 932V944.8M1732.5 932V944.8M1749.5 932V944.8M1766.5 932V947M1766.5 958.6V963M1783.5 932V944.8M1800.5 932V944.8M1817.5 932V944.8M1834.5 932V944.8M1850.5 932V947M1850.5 958.6V963" stroke="#9a9a9a" stroke-width="1.2"/><rect x="159.4" y="931.6" width="9.4" height="29.6" fill="#8c8436"/><path d="M163.9 932V944" stroke="#d0c870" stroke-width="1"/><path d="M112 941.4H115M112 944H115M112 946.6H115M112 949.2H115" stroke="#e6e6e6" stroke-width="1.2"/><path d="M117.4 948C119 941.4 121.4 941.4 123.4 946S127.6 951 129.6 945" fill="none" stroke="#42bfc0" stroke-width="1.5"/><rect x="4.5" y="968" width="241" height="27" fill="#e6c6c6" stroke="#f4f4f4" stroke-width="1.2"/><path d="M4 967.4H246" stroke="#8a8a8a" stroke-width="1"/><rect x="4.5" y="997" width="241" height="27.4" fill="#ffffff" stroke="#c8c8c8" stroke-width="1"/><path d="M4 996.6H246" stroke="#707070" stroke-width="1.2"/><path d="M250.5 966V1026" stroke="#2e2e2e" stroke-width="1.4"/><rect x="820.6" y="977.6" width="9" height="9" fill="#42bfc0"/><path d="M816 977V973.4H819.6M830.4 973.4H834V977M834 987.4V991H830.4M819.6 991H816V987.4" fill="none" stroke="#e6e6e6" stroke-width="1.3"/><rect x="851" y="980.6" width="13.6" height="11" rx="1.4" fill="#727272"/><path d="M853.8 980.6V977.6A4 4 0 0 1 861.8 977.6V980.6" fill="none" stroke="#727272" stroke-width="1.8"/><circle cx="857.8" cy="985" r="1.5" fill="#444"/><rect x="857.2" y="985" width="1.2" height="3.6" fill="#444"/><rect x="883" y="974" width="15.6" height="15.6" fill="#444" stroke="#f0f0f0" stroke-width="1.6"/><path d="M890.8 977L895.6 981.8L890.8 986.6L886 981.8Z" fill="#f0f0f0"/><circle cx="890.8" cy="981.8" r="1.8" fill="#444"/><path d="M884.6 975.6L887 978M897 975.6L894.6 978M884.6 988L887 985.6M897 988L894.6 985.6" stroke="#f0f0f0" stroke-width="1.3"/><rect x="926.8" y="972.8" width="70.7" height="20" fill="#5c5c5c"/><rect x="1030" y="972.8" width="70.6" height="20" fill="#5c5c5c"/><rect x="1132.6" y="972.8" width="71.2" height="20" fill="#5c5c5c"/><path d="M1190.6 999V1026" stroke="#2a2a2a" stroke-width="1.2"/><rect x="1193.4" y="1001.6" width="25" height="28" rx="4" fill="#4f82c8"/><g fill="none" stroke="#f0f0f0" stroke-width="1.1" stroke-linejoin="round"><path d="M1199.4 1011.4L1206 1008L1212.6 1011.4V1019L1206 1022.6L1199.4 1019ZM1199.4 1011.4L1206 1014.8L1212.6 1011.4M1206 1014.8V1022.6"/><path d="M1202.6 1009.8L1209.2 1013.2M1209.4 1009.8L1202.8 1013.2" stroke-width="0.7"/></g><g fill="#ececec"><rect x="1361" y="974.4" width="2" height="13.6"/><path d="M1364 981.2L1371 976V986.4ZM1371 981.2L1378.6 976V986.4Z"/><path d="M1392 981.2L1400.6 975.4V987ZM1402 975.2H1404.6V987.2H1402ZM1406.6 975.2H1409.2V987.2H1406.6Z"/><path d="M1421.4 972.8L1436.4 982.2L1421.4 991.6Z"/><path d="M1449 975.2H1451.600000000000001V987.2H1449ZM1453.6 975.2H1456.2V987.2H1453.6ZM1457.6 975.4L1466.2 981.2L1457.6 987Z"/><path d="M1479 976L1486.6 981.2L1479 986.4ZM1486.6 976L1493.6 981.2L1486.6 986.4Z"/><rect x="1494.6" y="974.4" width="2" height="13.6"/><path d="M1362 1008.2L1368 1003.4V1013ZM1377.8 1008.2L1371.8 1003.4V1013Z"/></g><path d="M1441.4 994h-3.6l3.6 -3.6z" fill="#e6e6e6"/><path d="M1385.6 972V992M1473.4 972V992" stroke="#2a2a2a" stroke-width="1.2"/><rect x="1387.2" y="998.6" width="86.2" height="18.8" fill="#5c5c5c"/><path d="M1385.8 998V1018" stroke="#2a2a2a" stroke-width="1.2"/><path d="M1463.8 1006.4L1466.4 1003.2L1469 1006.4ZM1463.8 1009.8L1469 1009.8L1466.4 1013Z" fill="#e6e6e6"/><circle cx="1487.6" cy="1006.4" r="6.6" fill="#f0f0f0"/><path d="M1487.6 1002.4V1006.8H1491" fill="none" stroke="#444" stroke-width="1.3"/><path d="M1499.92 1011.51L1499.92 1013.29L1498.64 1013.32L1498.17 1014.46L1499.05 1015.39L1497.79 1016.65L1496.86 1015.77L1495.72 1016.24L1495.69 1017.52L1493.91 1017.52L1493.88 1016.24L1492.74 1015.77L1491.81 1016.65L1490.55 1015.39L1491.43 1014.46L1490.96 1013.32L1489.68 1013.29L1489.68 1011.51L1490.96 1011.48L1491.43 1010.34L1490.55 1009.41L1491.81 1008.15L1492.74 1009.03L1493.88 1008.56L1493.91 1007.28L1495.69 1007.28L1495.72 1008.56L1496.86 1009.03L1497.79 1008.15L1499.05 1009.41L1498.17 1010.34L1498.64 1011.48Z" fill="#fbb52d" stroke="#6b4a12" stroke-width="0.7"/><circle cx="1494.8" cy="1012.4" r="1.87" fill="#444" stroke="#6b4a12" stroke-width="0.6"/><rect x="1519.2" y="969.4" width="52.4" height="53.6" rx="5" fill="#646464"/><path d="M1544.2 978.4V1009M1528.2 994.2H1559.8" stroke="#f4f4f4" stroke-width="7.8"/><g stroke="#2f4a4a" stroke-width="0.8" fill="#42bfc0"><path d="M1551.6 1003.4L1559.6 996.4L1562.8 999.6L1561 1001.2L1559.6 1000L1558.2 1001.4L1559.4 1002.6L1557.8 1004.2L1556.6 1003L1553.8 1005.8Z"/><circle cx="1550.2" cy="1007.2" r="4.6"/><circle cx="1549.4" cy="1008" r="1.7" fill="#646464"/></g><rect x="1577.2" y="969.4" width="57.8" height="24.4" rx="4" fill="#5e5e5e"/><rect x="1577.2" y="996.4" width="57.8" height="25.2" rx="4" fill="#5e5e5e"/><rect x="1640" y="969.4" width="143" height="21.6" fill="#606060"/><path d="M1765.6 977.4h8l-4.0 5.2z" fill="#ececec"/><rect x="1671.2" y="997" width="110" height="24.8" rx="4" fill="#5e5e5e"/><g fill="none" stroke="#42bfc0" stroke-width="1.6"><path d="M1646.4 1018C1650.4 1013 1650.4 1008 1648.4 1004.4M1659.6 1018C1655.6 1013 1655.6 1008 1657.6 1004.4"/></g><circle cx="1646.6" cy="1003.4" r="2" fill="#42bfc0"/><circle cx="1659.4" cy="1003.4" r="2" fill="#42bfc0"/><rect x="1650.4" y="1000.4" width="5.6" height="5.6" fill="none" stroke="#e6e6e6" stroke-width="1"/><rect x="1652.2" y="1002.2" width="2" height="2" fill="#42bfc0"/><path d="M1666 1021.6h-4l4 -4z" fill="#e6e6e6"/><circle cx="1809.6" cy="978.4" r="6" fill="none" stroke="#f0f0f0" stroke-width="2"/><path d="M1805.6 983L1800 989.4" stroke="#f0f0f0" stroke-width="2.6" stroke-linecap="round"/><rect x="1834.2" y="972" width="5" height="5" fill="#42bfc0"/><rect x="1840.2" y="972" width="5" height="5" fill="#42bfc0"/><rect x="1840.2" y="978" width="5" height="5" fill="#42bfc0"/><circle cx="1834.6" cy="981.6" r="4" fill="#444" stroke="#f0f0f0" stroke-width="1.6"/><path d="M1831.8 984.8L1827.4 989.4" stroke="#f0f0f0" stroke-width="2.2" stroke-linecap="round"/><path d="M1857 978.6L1864.2 975L1871.4 978.6V985.4L1864.2 989L1857 985.4Z" fill="#42bfc0"/><path d="M1857 978.6L1864.2 982L1871.4 978.6M1864.2 982V989" fill="none" stroke="#2a7a7a" stroke-width="0.9"/><path d="M1855 975.6V972.4H1858.2M1870.2 972.4H1873.4V975.6M1873.4 986.6V989.8H1870.2M1858.2 989.8H1855V986.6" fill="none" stroke="#f0f0f0" stroke-width="1.2"/><path d="M1877 993.6h-3.6l3.6 -3.6z" fill="#e6e6e6"/><path d="M1891 976.6L1896 974L1901.4 976.6V984L1896 986.6L1891 984Z" fill="#42bfc0"/><path d="M1891 976.6L1896 979.2L1901.4 976.6M1896 979.2V986.6" fill="none" stroke="#2a7a7a" stroke-width="0.8"/><path d="M1883.4 983.6L1887 980.6L1890.6 983.6L1887 986.6ZM1888.4 987.6L1892 984.6L1895.6 987.6L1892 990.6ZM1893.4 991L1896.6 988.4L1900 991" fill="#f0f0f0"/><path d="M1905 993.6h-3.6l3.6 -3.6z" fill="#e6e6e6"/><path d="M1801.6 1001L1813.8 1008L1801.6 1015M1806 1003.4C1809 1006 1809 1010 1806 1012.6" fill="none" stroke="#f0f0f0" stroke-width="1.5"/><path d="M1819 1021.6h-3.6l3.6 -3.6z" fill="#e6e6e6"/><circle cx="1836.6" cy="1000.6" r="1.9" fill="#f0f0f0"/><path d="M1836.4 1003.4L1835.4 1010L1832 1016.6M1835.6 1010L1840 1016.8M1836.2 1004.4L1832.4 1008.4M1836.6 1004.6L1840.6 1008" fill="none" stroke="#f0f0f0" stroke-width="1.7" stroke-linecap="round"/><path d="M1848 1021.6h-3.6l3.6 -3.6z" fill="#e6e6e6"/><path d="M1863 1000.6A7 7 0 1 0 1870 1007.6H1863Z" fill="#42bfc0"/><path d="M1864.6 999.4A7 7 0 0 1 1871.6 1006H1864.6Z" fill="#f0f0f0"/><path d="M1856 1013.6C1854 1014.6 1856 1016 1861 1014.6C1867 1013 1873 1008 1873.8 1003.4" fill="none" stroke="#f0f0f0" stroke-width="1.3"/><path d="M1877 1021.6h-3.6l3.6 -3.6z" fill="#e6e6e6"/><rect x="1884.4" y="1000.8" width="15" height="15" fill="none" stroke="#f0f0f0" stroke-width="1.5"/><rect x="1884.4" y="1008.4" width="7.4" height="7.4" fill="#f0f0f0"/><path d="M1892 1008L1897.6 1002.6M1893.6 1002.4H1897.8V1006.6" fill="none" stroke="#f0f0f0" stroke-width="1.5"/></svg>
<span id="t88" class="t" style="left:99.4px;top:903.5px;font-size:13px;color:#e0e0e0;font-family:'DejaVu Sans Condensed', 'DejaVu Sans', sans-serif;font-stretch:condensed;">&lt;</span>
<span id="t89" class="t" style="left:275.0px;top:903.5px;font-size:13px;color:#e0e0e0;font-family:'DejaVu Sans Condensed', 'DejaVu Sans', sans-serif;font-stretch:condensed;">&gt;</span>
<span id="t90" class="t" style="left:172.3px;top:903.5px;font-size:12.5px;color:#e0e0e0;font-family:'DejaVu Sans Condensed', 'DejaVu Sans', sans-serif;font-stretch:condensed;letter-spacing:0.17px;">0 / 100</span>
<span id="t91" class="t" style="left:246.1px;top:941.7px;font-size:12px;color:#c4c4c4;font-family:'DejaVu Sans Condensed', 'DejaVu Sans', sans-serif;font-stretch:condensed;">5</span>
<span id="t92" class="t" style="left:326.0px;top:941.7px;font-size:12px;color:#c4c4c4;font-family:'DejaVu Sans Condensed', 'DejaVu Sans', sans-serif;font-stretch:condensed;letter-spacing:-0.54px;">10</span>
<span id="t93" class="t" style="left:410.4px;top:941.7px;font-size:12px;color:#c4c4c4;font-family:'DejaVu Sans Condensed', 'DejaVu Sans', sans-serif;font-stretch:condensed;letter-spacing:-0.54px;">15</span>
<span id="t94" class="t" style="left:494.7px;top:941.7px;font-size:12px;color:#c4c4c4;font-family:'DejaVu Sans Condensed', 'DejaVu Sans', sans-serif;font-stretch:condensed;letter-spacing:-0.54px;">20</span>
<span id="t95" class="t" style="left:579.0px;top:941.7px;font-size:12px;color:#c4c4c4;font-family:'DejaVu Sans Condensed', 'DejaVu Sans', sans-serif;font-stretch:condensed;letter-spacing:-0.54px;">25</span>
<span id="t96" class="t" style="left:663.4px;top:941.7px;font-size:12px;color:#c4c4c4;font-family:'DejaVu Sans Condensed', 'DejaVu Sans', sans-serif;font-stretch:condensed;letter-spacing:-0.54px;">30</span>
<span id="t97" class="t" style="left:747.8px;top:941.7px;font-size:12px;color:#c4c4c4;font-family:'DejaVu Sans Condensed', 'DejaVu Sans', sans-serif;font-stretch:condensed;letter-spacing:-0.54px;">35</span>
<span id="t98" class="t" style="left:832.1px;top:941.7px;font-size:12px;color:#c4c4c4;font-family:'DejaVu Sans Condensed', 'DejaVu Sans', sans-serif;font-stretch:condensed;letter-spacing:-0.54px;">40</span>
<span id="t99" class="t" style="left:916.5px;top:941.7px;font-size:12px;color:#c4c4c4;font-family:'DejaVu Sans Condensed', 'DejaVu Sans', sans-serif;font-stretch:condensed;letter-spacing:-0.54px;">45</span>
<span id="t100" class="t" style="left:1000.8px;top:941.7px;font-size:12px;color:#c4c4c4;font-family:'DejaVu Sans Condensed', 'DejaVu Sans', sans-serif;font-stretch:condensed;letter-spacing:-0.54px;">50</span>
<span id="t101" class="t" style="left:1085.2px;top:941.7px;font-size:12px;color:#c4c4c4;font-family:'DejaVu Sans Condensed', 'DejaVu Sans', sans-serif;font-stretch:condensed;letter-spacing:-0.54px;">55</span>
<span id="t102" class="t" style="left:1169.5px;top:941.7px;font-size:12px;color:#c4c4c4;font-family:'DejaVu Sans Condensed', 'DejaVu Sans', sans-serif;font-stretch:condensed;letter-spacing:-0.54px;">60</span>
<span id="t103" class="t" style="left:1253.9px;top:941.7px;font-size:12px;color:#c4c4c4;font-family:'DejaVu Sans Condensed', 'DejaVu Sans', sans-serif;font-stretch:condensed;letter-spacing:-0.54px;">65</span>
<span id="t104" class="t" style="left:1338.2px;top:941.7px;font-size:12px;color:#c4c4c4;font-family:'DejaVu Sans Condensed', 'DejaVu Sans', sans-serif;font-stretch:condensed;letter-spacing:-0.54px;">70</span>
<span id="t105" class="t" style="left:1422.6px;top:941.7px;font-size:12px;color:#c4c4c4;font-family:'DejaVu Sans Condensed', 'DejaVu Sans', sans-serif;font-stretch:condensed;letter-spacing:-0.54px;">75</span>
<span id="t106" class="t" style="left:1506.9px;top:941.7px;font-size:12px;color:#c4c4c4;font-family:'DejaVu Sans Condensed', 'DejaVu Sans', sans-serif;font-stretch:condensed;letter-spacing:-0.54px;">80</span>
<span id="t107" class="t" style="left:1591.3px;top:941.7px;font-size:12px;color:#c4c4c4;font-family:'DejaVu Sans Condensed', 'DejaVu Sans', sans-serif;font-stretch:condensed;letter-spacing:-0.54px;">85</span>
<span id="t108" class="t" style="left:1675.6px;top:941.7px;font-size:12px;color:#c4c4c4;font-family:'DejaVu Sans Condensed', 'DejaVu Sans', sans-serif;font-stretch:condensed;letter-spacing:-0.54px;">90</span>
<span id="t109" class="t" style="left:1760.0px;top:941.7px;font-size:12px;color:#c4c4c4;font-family:'DejaVu Sans Condensed', 'DejaVu Sans', sans-serif;font-stretch:condensed;letter-spacing:-0.54px;">95</span>
<span id="t110" class="t" style="left:1841.0px;top:941.7px;font-size:12px;color:#c4c4c4;font-family:'DejaVu Sans Condensed', 'DejaVu Sans', sans-serif;font-stretch:condensed;letter-spacing:-0.40px;">100</span>
<span id="t111" class="t" style="left:161.4px;top:941.7px;font-size:12px;color:#e0d880;font-family:'DejaVu Sans Condensed', 'DejaVu Sans', sans-serif;font-stretch:condensed;">0</span>
<span id="t112" class="t" style="left:10.0px;top:995.3px;font-size:13.2px;color:#1a1a90;font-family:'DejaVu Sans Mono', 'Liberation Mono', monospace;letter-spacing:0.14px;">"Dist: 0.046m"</span>
<span id="t113" class="t" style="left:256.5px;top:971.0px;font-size:13px;color:#f0f0f0;font-family:'DejaVu Sans Condensed', 'DejaVu Sans', sans-serif;font-stretch:condensed;letter-spacing:-0.25px;">1 Helper Selected</span>
<span id="t114" class="t" style="left:256.5px;top:1002.1px;font-size:13px;color:#f0f0f0;font-family:'DejaVu Sans Condensed', 'DejaVu Sans', sans-serif;font-stretch:condensed;letter-spacing:-0.17px;">Click or click-and-drag to select objects</span>
<span id="t115" class="t" style="left:910.2px;top:971.0px;font-size:13px;color:#f0f0f0;font-family:'DejaVu Sans Condensed', 'DejaVu Sans', sans-serif;font-stretch:condensed;letter-spacing:-0.06px;">X:</span>
<span id="t116" class="t" style="left:930.6px;top:971.7px;font-size:13px;color:#8e8e8e;font-family:'DejaVu Sans Condensed', 'DejaVu Sans', sans-serif;font-stretch:condensed;letter-spacing:-0.62px;">0.055m</span>
<span id="t117" class="t" style="left:1013.7px;top:971.0px;font-size:13px;color:#f0f0f0;font-family:'DejaVu Sans Condensed', 'DejaVu Sans', sans-serif;font-stretch:condensed;letter-spacing:1.43px;">Y:</span>
<span id="t118" class="t" style="left:1033.0px;top:971.7px;font-size:13px;color:#8e8e8e;font-family:'DejaVu Sans Condensed', 'DejaVu Sans', sans-serif;font-stretch:condensed;letter-spacing:-0.27px;">-0.054m</span>
<span id="t119" class="t" style="left:1116.8px;top:971.0px;font-size:13px;color:#f0f0f0;font-family:'DejaVu Sans Condensed', 'DejaVu Sans', sans-serif;font-stretch:condensed;letter-spacing:-1.16px;">Z:</span>
<span id="t120" class="t" style="left:1136.1px;top:971.7px;font-size:13px;color:#8e8e8e;font-family:'DejaVu Sans Condensed', 'DejaVu Sans', sans-serif;font-stretch:condensed;letter-spacing:-0.60px;">0.0m</span>
<span id="t121" class="t" style="left:1222.3px;top:971.1px;font-size:13px;color:#f0f0f0;font-family:'DejaVu Sans Condensed', 'DejaVu Sans', sans-serif;font-stretch:condensed;letter-spacing:-0.35px;">Grid = 0.01m</span>
<span id="t122" class="t" style="left:1225.3px;top:1002.2px;font-size:13px;color:#f0f0f0;font-family:'DejaVu Sans Condensed', 'DejaVu Sans', sans-serif;font-stretch:condensed;letter-spacing:0.23px;">Add Time Tag</span>
<span id="t123" class="t" style="left:1391.4px;top:996.1px;font-size:13px;color:#e0e0e0;font-family:'DejaVu Sans Condensed', 'DejaVu Sans', sans-serif;font-stretch:condensed;">0</span>
<span id="t124" class="t" style="left:1593.3px;top:971.2px;font-size:13px;color:#f0f0f0;font-family:'DejaVu Sans Condensed', 'DejaVu Sans', sans-serif;font-stretch:condensed;letter-spacing:-0.72px;">Auto</span>
<span id="t125" class="t" style="left:1588.8px;top:998.2px;font-size:13px;color:#f0f0f0;font-family:'DejaVu Sans Condensed', 'DejaVu Sans', sans-serif;font-stretch:condensed;letter-spacing:-0.16px;">Set K.</span>
<span id="t126" class="t" style="left:1647.4px;top:968.9px;font-size:13px;color:#f0f0f0;font-family:'DejaVu Sans Condensed', 'DejaVu Sans', sans-serif;font-stretch:condensed;letter-spacing:-0.30px;">Selected</span>
<span id="t127" class="t" style="left:1702.5px;top:998.9px;font-size:13px;color:#f0f0f0;font-family:'DejaVu Sans Condensed', 'DejaVu Sans', sans-serif;font-stretch:condensed;">Filters...</span>
</div></body></html>
